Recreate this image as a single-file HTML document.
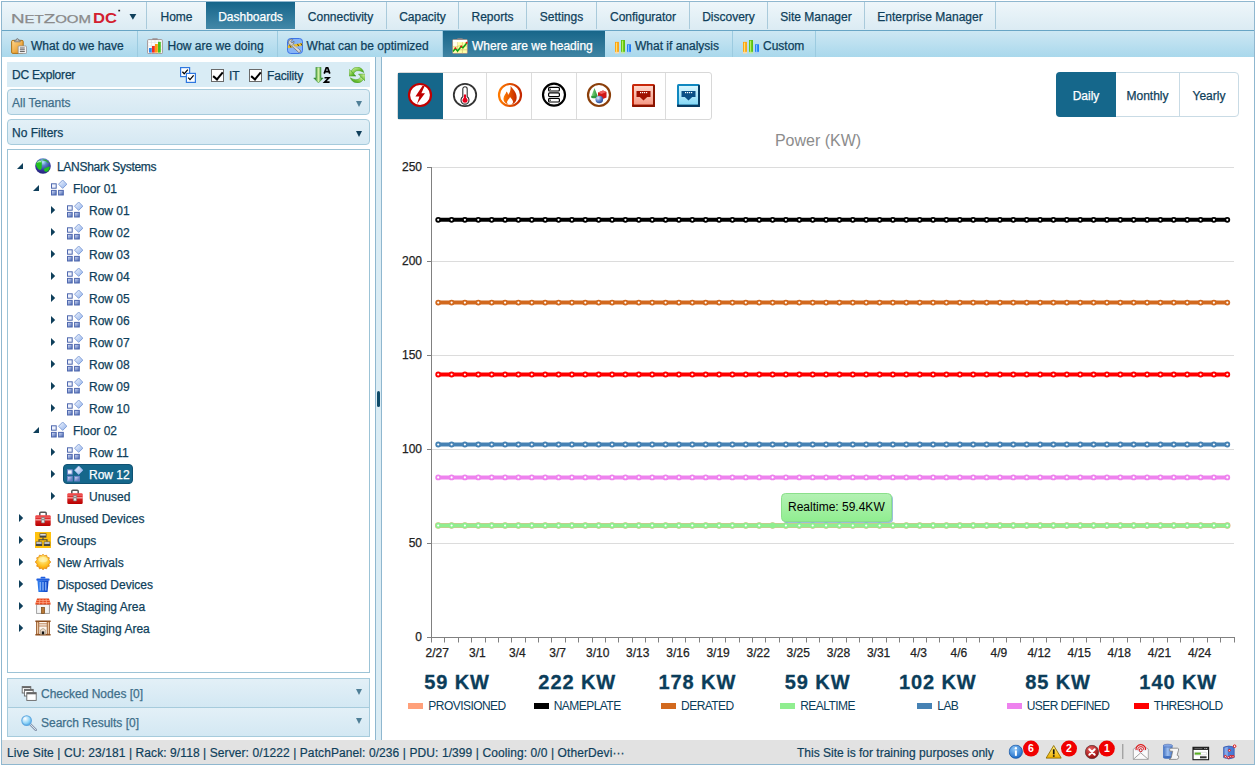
<!DOCTYPE html>
<html><head><meta charset="utf-8">
<style>
*{box-sizing:border-box;margin:0;padding:0}
html,body{width:1259px;height:767px;overflow:hidden;background:#fff;font-family:"Liberation Sans",sans-serif;font-size:12px;color:#0f3f5b}
.abs{position:absolute}
#frame{position:absolute;left:1px;top:1px;width:1254px;height:764px;border:1px solid #8fb7cf;background:#fff}
/* top menu */
#menu{position:absolute;left:2px;top:2px;width:1252px;height:29px;background:linear-gradient(#eef6fa,#dbebf3);border-bottom:1px solid #68a5c5}
#menu .mi{-webkit-text-stroke:0.25px currentColor;position:absolute;top:0;height:27px;line-height:30px;text-align:center;border-right:1px solid #a9cadb;font-size:12px;color:#0f3f5b;white-space:nowrap}
#menu .mi.act{background:linear-gradient(#16658a,#4388a8);color:#fff;border-right:none}
/* sub tabs */
#tabs{position:absolute;left:2px;top:31px;width:1252px;height:26px;background:linear-gradient(#cde7f3,#a9d8ec)}
#tabs .tb{-webkit-text-stroke:0.25px currentColor;position:absolute;top:0;height:26px;line-height:30px;border-right:1px solid #9ccbe0;font-size:12px;color:#0f3f5b;white-space:nowrap;}
#tabs .tb.act{background:linear-gradient(#17668a,#3f84a3);color:#fff;border-right:none}
#tabs .tb svg{position:absolute;top:7px}

/* left panel */
#lp{-webkit-text-stroke:0.25px currentColor;position:absolute;left:7px;top:62px;width:363px;height:675px}
#lph{position:absolute;left:0;top:0;width:363px;height:25px;background:#d9ecf5;line-height:26px;padding-left:5px;color:#0f3f5b}
.dd{position:absolute;left:0;width:363px;height:25px;border:1px solid #a6cbdc;border-radius:4px;background:linear-gradient(#e3f0f7,#d6e9f3);line-height:25px;padding-left:4px}
.dd:after,.acc:after{content:"";position:absolute;right:7.5px;top:11px;border:3.5px solid transparent;border-top:6px solid #4f7f97;border-bottom:none}
.dd.dark:after{border-top-color:#0f3f5b}
#tree{position:absolute;left:0;top:87px;width:363px;height:524px;border:1px solid #9cc3d6;background:#fff}
.tr{position:absolute;left:0;height:22px;line-height:24px;white-space:nowrap;color:#0f3f5b}
.tr .ar{position:absolute;top:0;width:10px;height:22px}
.tr .ic{position:absolute;top:3px;width:16px;height:16px}
.tr .lb{position:absolute;top:0}
.tr.sel .selbg{position:absolute;top:1px;height:20px;background:#15678b;border-radius:4px;border:1px solid #0f5273}
.tr.sel .lb{color:#fff}
.acc{position:absolute;left:0;width:363px;height:29px;border:1px solid #a6cbdc;background:linear-gradient(#e3f0f7,#d3e8f3);line-height:28px;padding-left:33px;color:#3f6f8a}
.acc:after{top:10px;right:7.5px}
#split{position:absolute;left:375px;top:57px;width:7px;height:683px;background:#dbecf4;border-left:1px solid #8fb7cf;border-right:1px solid #8fb7cf}
#split i{position:absolute;left:1px;top:334px;width:3px;height:16px;border-radius:2px;background:#0f4a68}
#lpborder{position:absolute;left:371px;top:58px;width:1px;height:682px;background:#9cc3d6}
#rp{position:absolute;left:382px;top:57px;width:872px;height:683px;background:#fff}
#status{-webkit-text-stroke:0.2px currentColor;position:absolute;left:2px;top:740px;width:1252px;height:24px;background:#e2e2e2;line-height:26px;color:#0f3f5b;white-space:nowrap}

.lg{position:absolute;top:669px;width:120px;text-align:center;color:#0b3d5a}
.lg .lv{font-size:20px;font-weight:bold;line-height:26px;letter-spacing:0.9px;-webkit-text-stroke:0.3px #0b3d5a}
.lg .ln{font-size:12px;line-height:16px;margin-top:3px;letter-spacing:-0.55px;white-space:nowrap}
.lg .ln i{display:inline-block;width:15px;height:6px;margin-right:5px;vertical-align:1px}
/* toolbar */
#tbar{position:absolute;left:397px;top:72px;width:315px;height:48px;border:1px solid #d8d8d8;border-radius:3px;background:#fff}
#tbar .b{position:absolute;top:0;width:45px;height:46px;border-right:1px solid #dcdcdc}
#tbar .b.act{background:#16678b;left:0 !important;top:0;height:46px;width:45px !important;border:none}
#per{-webkit-text-stroke:0.25px currentColor;position:absolute;left:1056px;top:72px;width:183px;height:45px;border:1px solid #c9dbe5;border-radius:4px;background:#fff}
#per .p{position:absolute;top:0;height:43px;line-height:46px;text-align:center;color:#0f3f5b;border-right:1px solid #c9dbe5}
#per .p.act{background:#15678b;color:#fff;top:-1px;left:-1px;height:45px;line-height:48px;border-radius:4px 0 0 4px;border:none}

.cb{position:absolute;top:7px;width:13px;height:13px;border:1px solid #6a6a6a;background:#fff}
.cb:after{content:"";position:absolute;left:3px;top:0px;width:4px;height:8px;border:solid #000;border-width:0 2px 2px 0;transform:rotate(40deg)}
.acc svg{position:absolute;left:12.6px;top:7px}
.sti{position:absolute;top:4px}
.bdg{position:absolute;top:2px;width:13px;height:13px;border-radius:7px;background:#e00000;color:#fff;font-size:9px;font-weight:bold;line-height:13px;text-align:center}
</style></head><body>
<svg width="0" height="0" style="position:absolute"><defs>
<radialGradient id="gGlobe" cx="0.4" cy="0.3" r="0.75"><stop offset="0" stop-color="#9fc4f0"/><stop offset="0.45" stop-color="#3a5fc0"/><stop offset="1" stop-color="#141a6a"/></radialGradient>
<linearGradient id="gSq" x1="0" y1="0" x2="1" y2="1"><stop offset="0" stop-color="#dfe6fb"/><stop offset="1" stop-color="#3f5fae"/></linearGradient>
<linearGradient id="gDi" x1="0" y1="0" x2="1" y2="1"><stop offset="0" stop-color="#f4f8ff"/><stop offset="1" stop-color="#8fb0ea"/></linearGradient>
<linearGradient id="gRed" x1="0" y1="0" x2="0" y2="1"><stop offset="0" stop-color="#f04040"/><stop offset="1" stop-color="#b80000"/></linearGradient>
<radialGradient id="gSun" cx="0.5" cy="0.35" r="0.7"><stop offset="0" stop-color="#fff3a0"/><stop offset="0.6" stop-color="#ffc020"/><stop offset="1" stop-color="#f08800"/></radialGradient>
<linearGradient id="gBlue" x1="0" y1="0" x2="1" y2="0"><stop offset="0" stop-color="#2f7ff0"/><stop offset="1" stop-color="#0b3fc0"/></linearGradient>
<linearGradient id="gClip" x1="0" y1="0" x2="1" y2="1"><stop offset="0" stop-color="#ffd890"/><stop offset="1" stop-color="#e08a10"/></linearGradient>
<linearGradient id="gGreen" x1="0" y1="0" x2="0" y2="1"><stop offset="0" stop-color="#c8f080"/><stop offset="1" stop-color="#3f9a1f"/></linearGradient>
<radialGradient id="gLens" cx="0.35" cy="0.3" r="0.8"><stop offset="0" stop-color="#ffffff"/><stop offset="0.6" stop-color="#8fd4f8"/><stop offset="1" stop-color="#3f9fe0"/></radialGradient>
<radialGradient id="gInfo" cx="0.4" cy="0.3" r="0.8"><stop offset="0" stop-color="#8fc8f8"/><stop offset="1" stop-color="#0f5fc0"/></radialGradient>
<radialGradient id="gErr" cx="0.4" cy="0.3" r="0.8"><stop offset="0" stop-color="#e86060"/><stop offset="1" stop-color="#8a0000"/></radialGradient>
<linearGradient id="gWarn" x1="0" y1="0" x2="0" y2="1"><stop offset="0" stop-color="#fff080"/><stop offset="1" stop-color="#f0b000"/></linearGradient>

<symbol id="ic-globe" viewBox="0 0 16 16">
<radialGradient id="gGl2" cx="0.5" cy="0.25" r="0.75"><stop offset="0" stop-color="#b8ecf8"/><stop offset="0.3" stop-color="#5a84c8"/><stop offset="0.7" stop-color="#34349a"/><stop offset="1" stop-color="#24247a"/></radialGradient>
<circle cx="8" cy="8" r="7.8" fill="url(#gGl2)"/>
<path d="M1 5.8 C1.8 4 3.4 2.6 5 2.6 C6.4 2.8 6.9 4 6.8 5.4 C6.7 7 7 8.4 6.6 10 C6.2 11.4 5.4 12.2 4.4 11.8 C3.2 11.2 2 9.6 1.4 8 C1 7 0.8 6.4 1 5.8Z" fill="#22c022"/>
<path d="M1.6 5 C2.4 3.6 3.6 2.8 5 2.6 C6 2.8 6.4 3.6 6.2 4.4 C4.6 4 3 4.4 1.6 5Z" fill="#a8e8a8"/>
<path d="M9 11.2 C9.6 10 11 9.4 12.4 9.2 C13.4 9 14 8.2 14.6 8.6 C15 9.6 14.6 11.2 13.6 12.4 C12.6 13.6 11 13.9 10 13.4 C9.2 12.9 8.8 12 9 11.2Z" fill="#1fc01f"/>
<path d="M7.6 1.6 C9 1.2 11 1.6 12.4 2.8 C13.4 3.6 14 4.6 13.6 5 C12.8 5 12 4 11 3.2 C10 2.6 8.6 2.6 7.6 2.4Z" fill="#30b030"/></symbol>

<symbol id="ic-grid" viewBox="0 0 16 16">
<rect x="0.5" y="3.8" width="4.7" height="4.4" fill="#eef2fd" stroke="#4f68ae" stroke-width="1"/>
<rect x="0.5" y="10.4" width="4.7" height="4.6" fill="url(#gSq)" stroke="#4f68ae" stroke-width="1"/>
<rect x="7.6" y="10.4" width="4.7" height="4.6" fill="url(#gSq)" stroke="#4f68ae" stroke-width="1"/>
<path d="M11.7 0 L15.9 4.2 L11.7 8.4 L7.5 4.2 Z" fill="url(#gDi)" stroke="#6f8fd0" stroke-width="0.8"/></symbol>

<symbol id="ic-gridsel" viewBox="0 0 16 16">
<rect x="0.5" y="3.8" width="4.7" height="4.4" fill="#eef2fd" stroke="#6a84c8" stroke-width="1"/>
<rect x="0.5" y="10.4" width="4.7" height="4.6" fill="url(#gSq)" stroke="#6a84c8" stroke-width="1"/>
<rect x="7.6" y="10.4" width="4.7" height="4.6" fill="url(#gSq)" stroke="#6a84c8" stroke-width="1"/>
<path d="M11.7 0 L15.9 4.2 L11.7 8.4 L7.5 4.2 Z" fill="url(#gDi)" stroke="#9fb8f0" stroke-width="0.8"/></symbol>

<symbol id="ic-toolbox" viewBox="0 -0.7 16 16">
<path d="M4.8 5 V2.6 Q4.8 1.6 5.8 1.6 H10.2 Q11.2 1.6 11.2 2.6 V5" fill="none" stroke="#555" stroke-width="1.5"/>
<rect x="0.3" y="4.6" width="15.4" height="10.6" rx="1.2" fill="url(#gRed)"/>
<rect x="0.3" y="8.6" width="15.4" height="1.1" fill="#ffd0d0" opacity="0.9"/>
<rect x="0.3" y="6" width="15.4" height="0.8" fill="#ff9a9a" opacity="0.7"/>
<rect x="6.4" y="6.8" width="3.2" height="5.4" rx="0.6" fill="#e8e8e8" stroke="#777" stroke-width="0.7"/>
<rect x="7.3" y="8" width="1.4" height="1.6" fill="#666"/></symbol>

<symbol id="ic-groups" viewBox="0 0 16 16"><rect x="0" y="0" width="16" height="16" fill="#ffc20e"/>
<rect x="4.6" y="1.4" width="6.8" height="4.2" fill="#444"/><rect x="5.2" y="2" width="5.6" height="1.6" fill="#ddd"/>
<rect x="0.8" y="9.6" width="6.4" height="4.4" fill="#444"/><rect x="1.4" y="10.2" width="5.2" height="1.6" fill="#ddd"/>
<rect x="8.8" y="9.6" width="6.4" height="4.4" fill="#444"/><rect x="9.4" y="10.2" width="5.2" height="1.6" fill="#ddd"/>
<path d="M8 5.6 V7.8 M4 9.6 V7.8 H12 V9.6" fill="none" stroke="#444" stroke-width="1.1"/></symbol>

<symbol id="ic-sun" viewBox="0 0 16 16">
<path d="M8 0.2 L9.5 1.7 L11.6 1.2 L12.2 3.2 L14.3 3.8 L13.8 5.9 L15.8 8 L13.8 10.1 L14.3 12.2 L12.2 12.8 L11.6 14.8 L9.5 14.3 L8 15.8 L6.5 14.3 L4.4 14.8 L3.8 12.8 L1.7 12.2 L2.2 10.1 L0.2 8 L2.2 5.9 L1.7 3.8 L3.8 3.2 L4.4 1.2 L6.5 1.7 Z" fill="url(#gSun)" stroke="#e08000" stroke-width="0.7"/>
<ellipse cx="8" cy="5.6" rx="4.6" ry="2.6" fill="#fff8c0" opacity="0.55"/></symbol>

<symbol id="ic-trash" viewBox="0 0 16 16">
<path d="M2.4 4.6 H13.6 L12.6 15.4 Q12.5 15.9 12 15.9 H4 Q3.5 15.9 3.4 15.4 Z" fill="url(#gBlue)"/>
<rect x="1.4" y="2.4" width="13.2" height="2.4" rx="0.8" fill="#1f5fe0"/><rect x="5.6" y="0.8" width="4.8" height="1.8" rx="0.6" fill="#1f5fe0"/>
<path d="M5.2 6 V14.4 M8 6 V14.4 M10.8 6 V14.4" stroke="#9fc4ff" stroke-width="1.1"/></symbol>

<symbol id="ic-stage1" viewBox="0 0 16 16">
<rect x="1.6" y="6.4" width="12.8" height="9" fill="#f4f4f4" stroke="#9a9a9a" stroke-width="0.9"/>
<path d="M2 0.6 H14 L15.8 6.6 H0.2 Z" fill="#e8481c"/>
<path d="M1.3 2.6 H14.7 M0.7 4.6 H15.3 M5 0.6 L4.2 6.6 M8 0.6 V6.6 M11 0.6 L11.8 6.6" stroke="#ffb090" stroke-width="0.7"/>
<rect x="6.4" y="9.4" width="3.2" height="6" fill="#b87838" stroke="#7a4a18" stroke-width="0.7"/></symbol>

<symbol id="ic-stage2" viewBox="0 0 16 16">
<rect x="3.4" y="2" width="9.2" height="12.4" fill="#fdf6ee"/>
<path d="M0.4 1.2 H15.6 M0.4 14.8 H15.6" stroke="#8a4a1a" stroke-width="1.4"/>
<rect x="1.6" y="1.8" width="2.2" height="12.4" fill="#f0c8a0" stroke="#8a4a1a" stroke-width="0.8"/>
<rect x="12.2" y="1.8" width="2.2" height="12.4" fill="#f0c8a0" stroke="#8a4a1a" stroke-width="0.8"/>
<path d="M3.8 3.8 H12.2 M3.8 6 H12.2" stroke="#b87848" stroke-width="0.9"/>
<path d="M5.4 14.4 V10 L8 8.4 L10.6 10 V14.4 Z" fill="#e8d8c8" stroke="#a08868" stroke-width="0.6"/>
<rect x="6.8" y="11.4" width="2.4" height="3" fill="#111"/></symbol>

<symbol id="ic-t1" viewBox="0 0 16 16">
<rect x="0.6" y="2.4" width="11.6" height="13" rx="1.2" fill="url(#gClip)" stroke="#a86808" stroke-width="0.9"/>
<path d="M3.6 3.8 V2.2 H5.2 Q5.4 0.5 6.4 0.5 Q7.4 0.5 7.6 2.2 H9.2 V3.8 Z" fill="#bfbfbf" stroke="#6a6a6a" stroke-width="0.7"/>
<rect x="7.2" y="8" width="8.2" height="7.6" rx="0.8" fill="#fff" stroke="#8a8a8a" stroke-width="0.8"/>
<path d="M8.8 10 H13.8 M8.8 11.8 H13.8 M8.8 13.6 H13.8" stroke="#444" stroke-width="0.9"/></symbol>

<symbol id="ic-t2" viewBox="0 0 16 16">
<rect x="0.6" y="1.6" width="14.8" height="14" rx="1" fill="#fff" stroke="#9a8a8a" stroke-width="0.9"/>
<rect x="5.4" y="0.3" width="5.2" height="1.6" fill="#9a8a8a"/>
<path d="M0.8 4.4 H15.2 M4.4 2 V15.4 M8 2 V15.4 M11.6 2 V15.4 M0.8 8 H15.2 M0.8 11.6 H15.2" stroke="#ddd" stroke-width="0.6"/>
<rect x="2" y="10" width="2.8" height="4.6" fill="#2f8af0"/><rect x="5" y="8" width="2.8" height="6.6" fill="#f03020"/>
<rect x="8" y="6" width="2.8" height="8.6" fill="#ff9a10"/><rect x="11" y="3.8" width="2.8" height="10.8" fill="#48c020"/></symbol>

<symbol id="ic-t3" viewBox="0 0 16 16">
<rect x="0.5" y="0.5" width="15" height="15" rx="3.2" fill="#86b4f6" stroke="#3c74e6" stroke-width="1"/>
<path d="M0.8 7.6 L15.2 5 V7.6 L0.8 10.2 Z" fill="#f4c020"/>
<path d="M2.6 7.3 L4 9.6 M6.4 6.6 L7.8 8.9 M10.4 5.9 L11.8 8.2 M13.8 5.3 L15 7.4" stroke="#5a4a10" stroke-width="1"/>
<path d="M1.6 3.2 A3 3 0 0 1 5.8 1.6 L3.9 3.5 L4.9 4.9 L7 3.2 A3 3 0 0 1 5.2 6.6 L13.4 12.4 A1.5 1.5 0 0 1 11.6 14.4 L3.8 7.2 A3 3 0 0 1 1.6 3.2Z" fill="#d0d0d0" stroke="#666" stroke-width="0.7"/>
<path d="M5.4 6.2 L12.4 12.6" stroke="#f4f4f4" stroke-width="0.8"/></symbol>

<symbol id="ic-t4" viewBox="0 0 16 16">
<rect x="0.6" y="1.6" width="14.8" height="14" rx="1" fill="#ffffa8" stroke="#9a8a8a" stroke-width="0.9"/>
<rect x="1" y="2" width="14" height="2.2" fill="#fff"/><rect x="5.4" y="0.3" width="5.2" height="1.6" fill="#9a8a8a"/>
<path d="M5.4 4.2 V15.2 M10.4 4.2 V15.2 M1 8 H15 M1 11.8 H15" stroke="#d8c870" stroke-width="0.8"/>
<rect x="1" y="4.2" width="4.4" height="3.8" fill="#fff" opacity="0.8"/>
<path d="M1 13.4 L3.4 10.6 L5.6 13 L9.2 8.6 L11 9.8 L14.8 5" fill="none" stroke="#10a010" stroke-width="1.5"/>
<circle cx="3.4" cy="10.2" r="1" fill="#f01010"/><circle cx="9.2" cy="8.4" r="1" fill="#f01010"/><circle cx="14.6" cy="4.8" r="1" fill="#f01010"/></symbol>

<symbol id="ic-t5" viewBox="0 0 16 16">
<rect x="0" y="3.9" width="3.9" height="10" fill="#ffa008"/><rect x="0.9" y="4.6" width="1.3" height="9.3" fill="#ffe070"/><rect x="0" y="13.9" width="3.9" height="1.6" fill="#ffd8a0"/>
<rect x="6" y="2" width="4" height="11.9" fill="#5cc010"/><rect x="6.9" y="2.7" width="1.3" height="11.2" fill="#b8f060"/><rect x="6" y="13.9" width="4" height="1.6" fill="#c0e8a0"/>
<rect x="12" y="6.3" width="4" height="7.6" fill="#1f7cf8"/><rect x="12.9" y="7" width="1.3" height="6.9" fill="#80c0ff"/><rect x="12" y="13.9" width="4" height="1.6" fill="#a8ccf8"/></symbol>

<symbol id="ic-dblchk" viewBox="0 0 16 16">
<rect x="0.6" y="0.6" width="9" height="9" fill="#fff" stroke="#2f78e0" stroke-width="1.2"/>
<path d="M2.4 4.8 L4.2 6.8 L7.8 2.6" fill="none" stroke="#000" stroke-width="1.3"/>
<rect x="6.4" y="6.4" width="9" height="9" fill="#fff" stroke="#2f78e0" stroke-width="1.2"/>
<path d="M8.2 10.6 L10 12.6 L13.6 8.4" fill="none" stroke="#000" stroke-width="1.3"/></symbol>

<symbol id="ic-sort" viewBox="0 0 18 16">
<linearGradient id="gSh" gradientUnits="userSpaceOnUse" x1="2.4" y1="0" x2="8.5" y2="0"><stop offset="0" stop-color="#2f8a2f"/><stop offset="0.5" stop-color="#d4f2a4"/><stop offset="1" stop-color="#2f8a2f"/></linearGradient>
<path d="M2.9 0.2 H8 V11 H10.2 L5.45 15.9 L0.7 11 H2.9 Z" fill="url(#gSh)" stroke="#2a8a2a" stroke-width="0.5"/>
<path d="M11.2 6.6 L13.4 0.5 H14.6 L16.8 6.6 M12 4.6 H16" fill="none" stroke="#000" stroke-width="1.7"/>
<path d="M11.5 10.7 H16.2 L11.6 15.1 H16.6" fill="none" stroke="#000" stroke-width="1.6"/></symbol>

<symbol id="ic-refresh" viewBox="0 0 16.4 16.2">
<linearGradient id="gRf" x1="0" y1="0" x2="1" y2="1"><stop offset="0" stop-color="#e4f8b8"/><stop offset="0.6" stop-color="#6cc030"/><stop offset="1" stop-color="#2f8a1f"/></linearGradient>
<linearGradient id="gRf2" x1="1" y1="0" x2="0" y2="1"><stop offset="0" stop-color="#e4f8b8"/><stop offset="0.6" stop-color="#6cc030"/><stop offset="1" stop-color="#2f8a1f"/></linearGradient>
<path d="M1.8 4.4 C3.5 1.5 6 0.1 8.2 0.1 C11.6 0.1 14.1 2.6 14.8 5.6 C12.6 3.9 10.1 3.5 8.1 3.7 C6.6 3.9 5.3 5 4.7 6.9 Z" fill="url(#gRf)" stroke="#3f9a22" stroke-width="0.5"/>
<path d="M0.2 2.4 V9.1 H6.9 Z" fill="url(#gRf)" stroke="#3f9a22" stroke-width="0.5"/>
<path d="M14.5 12.2 C12.9 14.8 10.6 16 8.5 16 C5.1 16 2.3 13.8 1.4 10.8 C3.6 12.4 6.1 12.8 8.1 12.6 C9.7 12.4 11.1 11.2 11.7 9.4 Z" fill="url(#gRf2)" stroke="#3f9a22" stroke-width="0.5"/>
<path d="M9.5 7.1 H16.2 V14.1 Z" fill="url(#gRf2)" stroke="#3f9a22" stroke-width="0.5"/></symbol>

<symbol id="ic-cascade" viewBox="0 0 16 16">
<rect x="1.2" y="0.6" width="8.6" height="6.4" fill="#fff" stroke="#666" stroke-width="0.9"/><rect x="1.2" y="0.6" width="8.6" height="1.5" fill="#666"/>
<rect x="3.4" y="3.4" width="8.8" height="6.6" fill="#fff" stroke="#666" stroke-width="0.9"/><rect x="3.4" y="3.4" width="8.8" height="1.5" fill="#666"/>
<rect x="5.8" y="6.6" width="9.4" height="7.8" fill="#fff" stroke="#666" stroke-width="0.9"/><rect x="5.8" y="6.6" width="9.4" height="1.7" fill="#666"/></symbol>

<symbol id="ic-search" viewBox="0 0 16 16">
<path d="M8.8 8.8 L14.8 14.8" stroke="#8a9ab0" stroke-width="2.6" stroke-linecap="round"/>
<path d="M9.2 9.2 L14.6 14.6" stroke="#d8e4f0" stroke-width="1" stroke-linecap="round"/>
<circle cx="5.6" cy="5.6" r="4.8" fill="url(#gLens)" stroke="#5fa8e0" stroke-width="1.1"/></symbol>

<symbol id="ic-info" viewBox="0 0 16 16"><circle cx="8" cy="8" r="7.4" fill="url(#gInfo)" stroke="#0f4fa0" stroke-width="0.8"/>
<rect x="7" y="6.6" width="2.2" height="6" fill="#fff"/><circle cx="8.1" cy="4.2" r="1.3" fill="#fff"/></symbol>
<symbol id="ic-warn" viewBox="0 0 16 16"><path d="M8 0.8 L15.6 14.8 H0.4 Z" fill="url(#gWarn)" stroke="#8a6a00" stroke-width="0.9" stroke-linejoin="round"/>
<rect x="7.2" y="5" width="1.7" height="5.6" fill="#111"/><rect x="7.2" y="11.6" width="1.7" height="1.7" fill="#111"/></symbol>
<symbol id="ic-err" viewBox="0 0 16 16"><circle cx="8" cy="8" r="7.4" fill="url(#gErr)" stroke="#6a3a3a" stroke-width="0.9"/>
<path d="M5 5 L11 11 M11 5 L5 11" stroke="#fff" stroke-width="2.2" stroke-linecap="round"/></symbol>
</defs></svg>

<div id="frame"></div>
<div id="menu"><div class="mi" style="left:0;width:145px"></div><svg class="abs" style="left:-2px;top:-2px" width="146" height="30" viewBox="0 0 146 30" font-family="Liberation Sans, sans-serif">
<text x="11" y="23" fill="#8a8a8a" stroke="#8a8a8a" stroke-width="0.25" font-size="13.3" textLength="80" lengthAdjust="spacingAndGlyphs">N<tspan font-size="10.6">ET</tspan>Z<tspan font-size="10.6">OOM</tspan></text>
<text x="93" y="23.2" fill="#d2202f" font-weight="bold" font-size="15.4" textLength="24" lengthAdjust="spacingAndGlyphs">DC</text>
<rect x="118.3" y="9.8" width="1.8" height="1.6" fill="#222"/>
<path d="M129.5 14 H136.3 L132.9 19.8 Z" fill="#0f3f5b"/></svg><div class="mi" style="left:145px;width:59px;border-right:none">Home</div><div class="mi act" style="left:204px;width:89px">Dashboards</div><div class="mi" style="left:293px;width:92px">Connectivity</div><div class="mi" style="left:385px;width:72px">Capacity</div><div class="mi" style="left:457px;width:68px">Reports</div><div class="mi" style="left:525px;width:70px">Settings</div><div class="mi" style="left:595px;width:93px">Configurator</div><div class="mi" style="left:688px;width:78px">Discovery</div><div class="mi" style="left:766px;width:97px">Site Manager</div><div class="mi" style="left:863px;width:131px">Enterprise Manager</div></div>
<div id="tabs"><div class="tb" style="left:0px;width:136px;padding-left:29px"><svg width="16" height="16" viewBox="0 0 16 16" style="left:9px"><use href="#ic-t1"/></svg>What do we have</div><div class="tb" style="left:136px;width:140px;padding-left:29.5px"><svg width="16" height="16" viewBox="0 0 16 16" style="left:9px"><use href="#ic-t2"/></svg>How are we doing</div><div class="tb" style="left:276px;width:165px;padding-left:28.6px"><svg width="16" height="16" viewBox="0 0 16 16" style="left:9px"><use href="#ic-t3"/></svg>What can be optimized</div><div class="tb act" style="left:441px;width:162px;padding-left:29px"><svg width="16" height="16" viewBox="0 0 16 16" style="left:9.4px"><use href="#ic-t4"/></svg>Where are we heading</div><div class="tb" style="left:603px;width:128px;padding-left:30px"><svg width="16" height="16" viewBox="0 0 16 16" style="left:10px"><use href="#ic-t5"/></svg>What if analysis</div><div class="tb" style="left:731px;width:83px;padding-left:30px"><svg width="16" height="16" viewBox="0 0 16 16" style="left:10px"><use href="#ic-t5"/></svg>Custom</div></div>
<div id="lp"><div id="lph"><span style="letter-spacing:-0.2px">DC Explorer</span>
<svg class="abs" style="left:173px;top:5px" width="16" height="16"><use href="#ic-dblchk"/></svg>
<span class="cb" style="left:204px"></span><span class="abs" style="left:222px;top:1px">IT</span>
<span class="cb" style="left:242px"></span><span class="abs" style="left:260px;top:1px;letter-spacing:-0.15px">Facility</span>
<svg class="abs" style="left:306px;top:5px" width="18" height="16"><use href="#ic-sort"/></svg>
<svg class="abs" style="left:342px;top:4.8px" width="16.4" height="16.2"><use href="#ic-refresh"/></svg>
</div>
<div class="dd" style="top:27px;height:26px;line-height:26px;color:#3f6f8a">All Tenants</div>
<div class="dd dark" style="top:57px;height:26px;line-height:26px">No Filters</div>
<div id="tree"><div class="tr" style="top:5px"><svg class="ar" style="left:7px" viewBox="0 0 10 22"><path d="M2 14 L8 14 L8 8 Z" fill="#0f3f5b"/></svg><svg class="ic globe" style="left:27px" viewBox="0 0 16 16"><use href="#ic-globe"/></svg><span class="lb" style="left:49px;letter-spacing:-0.3px">LANShark Systems</span></div><div class="tr" style="top:27px"><svg class="ar" style="left:23px" viewBox="0 0 10 22"><path d="M2 14 L8 14 L8 8 Z" fill="#0f3f5b"/></svg><svg class="ic grid" style="left:43px" viewBox="0 0 16 16"><use href="#ic-grid"/></svg><span class="lb" style="left:65px">Floor 01</span></div><div class="tr" style="top:49px"><svg class="ar" style="left:41px" viewBox="0 0 10 22"><path d="M2 7 L6.2 11 L2 15 Z" fill="#0f3f5b"/></svg><svg class="ic grid" style="left:59px" viewBox="0 0 16 16"><use href="#ic-grid"/></svg><span class="lb" style="left:81px">Row 01</span></div><div class="tr" style="top:71px"><svg class="ar" style="left:41px" viewBox="0 0 10 22"><path d="M2 7 L6.2 11 L2 15 Z" fill="#0f3f5b"/></svg><svg class="ic grid" style="left:59px" viewBox="0 0 16 16"><use href="#ic-grid"/></svg><span class="lb" style="left:81px">Row 02</span></div><div class="tr" style="top:93px"><svg class="ar" style="left:41px" viewBox="0 0 10 22"><path d="M2 7 L6.2 11 L2 15 Z" fill="#0f3f5b"/></svg><svg class="ic grid" style="left:59px" viewBox="0 0 16 16"><use href="#ic-grid"/></svg><span class="lb" style="left:81px">Row 03</span></div><div class="tr" style="top:115px"><svg class="ar" style="left:41px" viewBox="0 0 10 22"><path d="M2 7 L6.2 11 L2 15 Z" fill="#0f3f5b"/></svg><svg class="ic grid" style="left:59px" viewBox="0 0 16 16"><use href="#ic-grid"/></svg><span class="lb" style="left:81px">Row 04</span></div><div class="tr" style="top:137px"><svg class="ar" style="left:41px" viewBox="0 0 10 22"><path d="M2 7 L6.2 11 L2 15 Z" fill="#0f3f5b"/></svg><svg class="ic grid" style="left:59px" viewBox="0 0 16 16"><use href="#ic-grid"/></svg><span class="lb" style="left:81px">Row 05</span></div><div class="tr" style="top:159px"><svg class="ar" style="left:41px" viewBox="0 0 10 22"><path d="M2 7 L6.2 11 L2 15 Z" fill="#0f3f5b"/></svg><svg class="ic grid" style="left:59px" viewBox="0 0 16 16"><use href="#ic-grid"/></svg><span class="lb" style="left:81px">Row 06</span></div><div class="tr" style="top:181px"><svg class="ar" style="left:41px" viewBox="0 0 10 22"><path d="M2 7 L6.2 11 L2 15 Z" fill="#0f3f5b"/></svg><svg class="ic grid" style="left:59px" viewBox="0 0 16 16"><use href="#ic-grid"/></svg><span class="lb" style="left:81px">Row 07</span></div><div class="tr" style="top:203px"><svg class="ar" style="left:41px" viewBox="0 0 10 22"><path d="M2 7 L6.2 11 L2 15 Z" fill="#0f3f5b"/></svg><svg class="ic grid" style="left:59px" viewBox="0 0 16 16"><use href="#ic-grid"/></svg><span class="lb" style="left:81px">Row 08</span></div><div class="tr" style="top:225px"><svg class="ar" style="left:41px" viewBox="0 0 10 22"><path d="M2 7 L6.2 11 L2 15 Z" fill="#0f3f5b"/></svg><svg class="ic grid" style="left:59px" viewBox="0 0 16 16"><use href="#ic-grid"/></svg><span class="lb" style="left:81px">Row 09</span></div><div class="tr" style="top:247px"><svg class="ar" style="left:41px" viewBox="0 0 10 22"><path d="M2 7 L6.2 11 L2 15 Z" fill="#0f3f5b"/></svg><svg class="ic grid" style="left:59px" viewBox="0 0 16 16"><use href="#ic-grid"/></svg><span class="lb" style="left:81px">Row 10</span></div><div class="tr" style="top:269px"><svg class="ar" style="left:23px" viewBox="0 0 10 22"><path d="M2 14 L8 14 L8 8 Z" fill="#0f3f5b"/></svg><svg class="ic grid" style="left:43px" viewBox="0 0 16 16"><use href="#ic-grid"/></svg><span class="lb" style="left:65px">Floor 02</span></div><div class="tr" style="top:291px"><svg class="ar" style="left:41px" viewBox="0 0 10 22"><path d="M2 7 L6.2 11 L2 15 Z" fill="#0f3f5b"/></svg><svg class="ic grid" style="left:59px" viewBox="0 0 16 16"><use href="#ic-grid"/></svg><span class="lb" style="left:81px">Row 11</span></div><div class="tr sel" style="top:313px"><svg class="ar" style="left:41px" viewBox="0 0 10 22"><path d="M2 7 L6.2 11 L2 15 Z" fill="#0f3f5b"/></svg><div class="selbg" style="left:55px;width:70px"></div><svg class="ic gridsel" style="left:59px" viewBox="0 0 16 16"><use href="#ic-gridsel"/></svg><span class="lb" style="left:81px">Row 12</span></div><div class="tr" style="top:335px"><svg class="ar" style="left:41px" viewBox="0 0 10 22"><path d="M2 7 L6.2 11 L2 15 Z" fill="#0f3f5b"/></svg><svg class="ic toolbox" style="left:59px" viewBox="0 0 16 16"><use href="#ic-toolbox"/></svg><span class="lb" style="left:81px">Unused</span></div><div class="tr" style="top:357px"><svg class="ar" style="left:9px" viewBox="0 0 10 22"><path d="M2 7 L6.2 11 L2 15 Z" fill="#0f3f5b"/></svg><svg class="ic toolbox" style="left:27px" viewBox="0 0 16 16"><use href="#ic-toolbox"/></svg><span class="lb" style="left:49px">Unused Devices</span></div><div class="tr" style="top:379px"><svg class="ar" style="left:9px" viewBox="0 0 10 22"><path d="M2 7 L6.2 11 L2 15 Z" fill="#0f3f5b"/></svg><svg class="ic groups" style="left:27px" viewBox="0 0 16 16"><use href="#ic-groups"/></svg><span class="lb" style="left:49px">Groups</span></div><div class="tr" style="top:401px"><svg class="ar" style="left:9px" viewBox="0 0 10 22"><path d="M2 7 L6.2 11 L2 15 Z" fill="#0f3f5b"/></svg><svg class="ic sun" style="left:27px" viewBox="0 0 16 16"><use href="#ic-sun"/></svg><span class="lb" style="left:49px">New Arrivals</span></div><div class="tr" style="top:423px"><svg class="ar" style="left:9px" viewBox="0 0 10 22"><path d="M2 7 L6.2 11 L2 15 Z" fill="#0f3f5b"/></svg><svg class="ic trash" style="left:27px" viewBox="0 0 16 16"><use href="#ic-trash"/></svg><span class="lb" style="left:49px">Disposed Devices</span></div><div class="tr" style="top:445px"><svg class="ar" style="left:9px" viewBox="0 0 10 22"><path d="M2 7 L6.2 11 L2 15 Z" fill="#0f3f5b"/></svg><svg class="ic stage1" style="left:27px" viewBox="0 0 16 16"><use href="#ic-stage1"/></svg><span class="lb" style="left:49px">My Staging Area</span></div><div class="tr" style="top:467px"><svg class="ar" style="left:9px" viewBox="0 0 10 22"><path d="M2 7 L6.2 11 L2 15 Z" fill="#0f3f5b"/></svg><svg class="ic stage2" style="left:27px" viewBox="0 0 16 16"><use href="#ic-stage2"/></svg><span class="lb" style="left:49px">Site Staging Area</span></div></div>
<div class="acc" style="top:616px;height:30px;line-height:30px"><svg width="16" height="16"><use href="#ic-cascade"/></svg>Checked Nodes [0]</div>
<div class="acc" style="top:645px;height:30px;line-height:30px"><svg width="16" height="16"><use href="#ic-search"/></svg>Search Results [0]</div>
</div>
<div id="split"><i></i></div>
<div id="rp"></div>
<div id="status"><span style="position:absolute;left:5px;letter-spacing:0.09px">Live Site | CU: 23/181 | Rack: 9/118 | Server: 0/1222 | PatchPanel: 0/236 | PDU: 1/399 | Cooling: 0/0 | OtherDevi···</span><span style="position:absolute;left:795px">This Site is for training purposes only</span></div>
<svg id="chart" class="abs" style="left:0;top:0" width="1259" height="767" viewBox="0 0 1259 767" font-family="Liberation Sans, sans-serif"><line x1="431" x2="1234" y1="543.5" y2="543.5" stroke="#dcdcdc" stroke-width="1"/><line x1="431" x2="1234" y1="449.5" y2="449.5" stroke="#dcdcdc" stroke-width="1"/><line x1="431" x2="1234" y1="355.5" y2="355.5" stroke="#dcdcdc" stroke-width="1"/><line x1="431" x2="1234" y1="261.5" y2="261.5" stroke="#dcdcdc" stroke-width="1"/><line x1="431" x2="1234" y1="167.5" y2="167.5" stroke="#dcdcdc" stroke-width="1"/><line x1="427" x2="431" y1="637.5" y2="637.5" stroke="#808080" stroke-width="1"/><text x="422" y="640.5" font-size="12" text-anchor="end" fill="#222" stroke="#222" stroke-width="0.25">0</text><line x1="427" x2="431" y1="543.5" y2="543.5" stroke="#808080" stroke-width="1"/><text x="422" y="546.5" font-size="12" text-anchor="end" fill="#222" stroke="#222" stroke-width="0.25">50</text><line x1="427" x2="431" y1="449.5" y2="449.5" stroke="#808080" stroke-width="1"/><text x="422" y="452.5" font-size="12" text-anchor="end" fill="#222" stroke="#222" stroke-width="0.25">100</text><line x1="427" x2="431" y1="355.5" y2="355.5" stroke="#808080" stroke-width="1"/><text x="422" y="358.5" font-size="12" text-anchor="end" fill="#222" stroke="#222" stroke-width="0.25">150</text><line x1="427" x2="431" y1="261.5" y2="261.5" stroke="#808080" stroke-width="1"/><text x="422" y="264.5" font-size="12" text-anchor="end" fill="#222" stroke="#222" stroke-width="0.25">200</text><line x1="427" x2="431" y1="167.5" y2="167.5" stroke="#808080" stroke-width="1"/><text x="422" y="170.5" font-size="12" text-anchor="end" fill="#222" stroke="#222" stroke-width="0.25">250</text><line x1="431.5" x2="431.5" y1="167" y2="638" stroke="#808080"/><line x1="431" x2="1234" y1="637.5" y2="637.5" stroke="#808080"/><line x1="431.5" x2="431.5" y1="637" y2="642.5" stroke="#808080"/><line x1="444.5" x2="444.5" y1="637" y2="642.5" stroke="#808080"/><line x1="458.5" x2="458.5" y1="637" y2="642.5" stroke="#808080"/><line x1="471.5" x2="471.5" y1="637" y2="642.5" stroke="#808080"/><line x1="485.5" x2="485.5" y1="637" y2="642.5" stroke="#808080"/><line x1="498.5" x2="498.5" y1="637" y2="642.5" stroke="#808080"/><line x1="511.5" x2="511.5" y1="637" y2="642.5" stroke="#808080"/><line x1="525.5" x2="525.5" y1="637" y2="642.5" stroke="#808080"/><line x1="538.5" x2="538.5" y1="637" y2="642.5" stroke="#808080"/><line x1="551.5" x2="551.5" y1="637" y2="642.5" stroke="#808080"/><line x1="565.5" x2="565.5" y1="637" y2="642.5" stroke="#808080"/><line x1="578.5" x2="578.5" y1="637" y2="642.5" stroke="#808080"/><line x1="592.5" x2="592.5" y1="637" y2="642.5" stroke="#808080"/><line x1="605.5" x2="605.5" y1="637" y2="642.5" stroke="#808080"/><line x1="618.5" x2="618.5" y1="637" y2="642.5" stroke="#808080"/><line x1="632.5" x2="632.5" y1="637" y2="642.5" stroke="#808080"/><line x1="645.5" x2="645.5" y1="637" y2="642.5" stroke="#808080"/><line x1="658.5" x2="658.5" y1="637" y2="642.5" stroke="#808080"/><line x1="672.5" x2="672.5" y1="637" y2="642.5" stroke="#808080"/><line x1="685.5" x2="685.5" y1="637" y2="642.5" stroke="#808080"/><line x1="699.5" x2="699.5" y1="637" y2="642.5" stroke="#808080"/><line x1="712.5" x2="712.5" y1="637" y2="642.5" stroke="#808080"/><line x1="725.5" x2="725.5" y1="637" y2="642.5" stroke="#808080"/><line x1="739.5" x2="739.5" y1="637" y2="642.5" stroke="#808080"/><line x1="752.5" x2="752.5" y1="637" y2="642.5" stroke="#808080"/><line x1="765.5" x2="765.5" y1="637" y2="642.5" stroke="#808080"/><line x1="779.5" x2="779.5" y1="637" y2="642.5" stroke="#808080"/><line x1="792.5" x2="792.5" y1="637" y2="642.5" stroke="#808080"/><line x1="806.5" x2="806.5" y1="637" y2="642.5" stroke="#808080"/><line x1="819.5" x2="819.5" y1="637" y2="642.5" stroke="#808080"/><line x1="832.5" x2="832.5" y1="637" y2="642.5" stroke="#808080"/><line x1="846.5" x2="846.5" y1="637" y2="642.5" stroke="#808080"/><line x1="859.5" x2="859.5" y1="637" y2="642.5" stroke="#808080"/><line x1="872.5" x2="872.5" y1="637" y2="642.5" stroke="#808080"/><line x1="886.5" x2="886.5" y1="637" y2="642.5" stroke="#808080"/><line x1="899.5" x2="899.5" y1="637" y2="642.5" stroke="#808080"/><line x1="913.5" x2="913.5" y1="637" y2="642.5" stroke="#808080"/><line x1="926.5" x2="926.5" y1="637" y2="642.5" stroke="#808080"/><line x1="939.5" x2="939.5" y1="637" y2="642.5" stroke="#808080"/><line x1="953.5" x2="953.5" y1="637" y2="642.5" stroke="#808080"/><line x1="966.5" x2="966.5" y1="637" y2="642.5" stroke="#808080"/><line x1="979.5" x2="979.5" y1="637" y2="642.5" stroke="#808080"/><line x1="993.5" x2="993.5" y1="637" y2="642.5" stroke="#808080"/><line x1="1006.5" x2="1006.5" y1="637" y2="642.5" stroke="#808080"/><line x1="1020.5" x2="1020.5" y1="637" y2="642.5" stroke="#808080"/><line x1="1033.5" x2="1033.5" y1="637" y2="642.5" stroke="#808080"/><line x1="1046.5" x2="1046.5" y1="637" y2="642.5" stroke="#808080"/><line x1="1060.5" x2="1060.5" y1="637" y2="642.5" stroke="#808080"/><line x1="1073.5" x2="1073.5" y1="637" y2="642.5" stroke="#808080"/><line x1="1086.5" x2="1086.5" y1="637" y2="642.5" stroke="#808080"/><line x1="1100.5" x2="1100.5" y1="637" y2="642.5" stroke="#808080"/><line x1="1113.5" x2="1113.5" y1="637" y2="642.5" stroke="#808080"/><line x1="1127.5" x2="1127.5" y1="637" y2="642.5" stroke="#808080"/><line x1="1140.5" x2="1140.5" y1="637" y2="642.5" stroke="#808080"/><line x1="1153.5" x2="1153.5" y1="637" y2="642.5" stroke="#808080"/><line x1="1167.5" x2="1167.5" y1="637" y2="642.5" stroke="#808080"/><line x1="1180.5" x2="1180.5" y1="637" y2="642.5" stroke="#808080"/><line x1="1193.5" x2="1193.5" y1="637" y2="642.5" stroke="#808080"/><line x1="1207.5" x2="1207.5" y1="637" y2="642.5" stroke="#808080"/><line x1="1220.5" x2="1220.5" y1="637" y2="642.5" stroke="#808080"/><line x1="1234.5" x2="1234.5" y1="637" y2="642.5" stroke="#808080"/><text x="437.2" y="657" font-size="12" text-anchor="middle" fill="#222" stroke="#222" stroke-width="0.25">2/27</text><text x="477.3" y="657" font-size="12" text-anchor="middle" fill="#222" stroke="#222" stroke-width="0.25">3/1</text><text x="517.4" y="657" font-size="12" text-anchor="middle" fill="#222" stroke="#222" stroke-width="0.25">3/4</text><text x="557.6" y="657" font-size="12" text-anchor="middle" fill="#222" stroke="#222" stroke-width="0.25">3/7</text><text x="597.7" y="657" font-size="12" text-anchor="middle" fill="#222" stroke="#222" stroke-width="0.25">3/10</text><text x="637.8" y="657" font-size="12" text-anchor="middle" fill="#222" stroke="#222" stroke-width="0.25">3/13</text><text x="677.9" y="657" font-size="12" text-anchor="middle" fill="#222" stroke="#222" stroke-width="0.25">3/16</text><text x="718.1" y="657" font-size="12" text-anchor="middle" fill="#222" stroke="#222" stroke-width="0.25">3/19</text><text x="758.2" y="657" font-size="12" text-anchor="middle" fill="#222" stroke="#222" stroke-width="0.25">3/22</text><text x="798.3" y="657" font-size="12" text-anchor="middle" fill="#222" stroke="#222" stroke-width="0.25">3/25</text><text x="838.4" y="657" font-size="12" text-anchor="middle" fill="#222" stroke="#222" stroke-width="0.25">3/28</text><text x="878.6" y="657" font-size="12" text-anchor="middle" fill="#222" stroke="#222" stroke-width="0.25">3/31</text><text x="918.7" y="657" font-size="12" text-anchor="middle" fill="#222" stroke="#222" stroke-width="0.25">4/3</text><text x="958.8" y="657" font-size="12" text-anchor="middle" fill="#222" stroke="#222" stroke-width="0.25">4/6</text><text x="998.9" y="657" font-size="12" text-anchor="middle" fill="#222" stroke="#222" stroke-width="0.25">4/9</text><text x="1039.1" y="657" font-size="12" text-anchor="middle" fill="#222" stroke="#222" stroke-width="0.25">4/12</text><text x="1079.2" y="657" font-size="12" text-anchor="middle" fill="#222" stroke="#222" stroke-width="0.25">4/15</text><text x="1119.3" y="657" font-size="12" text-anchor="middle" fill="#222" stroke="#222" stroke-width="0.25">4/18</text><text x="1159.4" y="657" font-size="12" text-anchor="middle" fill="#222" stroke="#222" stroke-width="0.25">4/21</text><text x="1199.6" y="657" font-size="12" text-anchor="middle" fill="#222" stroke="#222" stroke-width="0.25">4/24</text><g><line x1="438.2" x2="1227.3" y1="525.5" y2="525.5" stroke="#f5b08a" stroke-width="4.8"/><circle cx="438.2" cy="525.5" r="2.3" fill="#fff" stroke="#f5b08a" stroke-width="1.8"/><circle cx="451.6" cy="525.5" r="2.3" fill="#fff" stroke="#f5b08a" stroke-width="1.8"/><circle cx="464.9" cy="525.5" r="2.3" fill="#fff" stroke="#f5b08a" stroke-width="1.8"/><circle cx="478.3" cy="525.5" r="2.3" fill="#fff" stroke="#f5b08a" stroke-width="1.8"/><circle cx="491.7" cy="525.5" r="2.3" fill="#fff" stroke="#f5b08a" stroke-width="1.8"/><circle cx="505.1" cy="525.5" r="2.3" fill="#fff" stroke="#f5b08a" stroke-width="1.8"/><circle cx="518.4" cy="525.5" r="2.3" fill="#fff" stroke="#f5b08a" stroke-width="1.8"/><circle cx="531.8" cy="525.5" r="2.3" fill="#fff" stroke="#f5b08a" stroke-width="1.8"/><circle cx="545.2" cy="525.5" r="2.3" fill="#fff" stroke="#f5b08a" stroke-width="1.8"/><circle cx="558.6" cy="525.5" r="2.3" fill="#fff" stroke="#f5b08a" stroke-width="1.8"/><circle cx="571.9" cy="525.5" r="2.3" fill="#fff" stroke="#f5b08a" stroke-width="1.8"/><circle cx="585.3" cy="525.5" r="2.3" fill="#fff" stroke="#f5b08a" stroke-width="1.8"/><circle cx="598.7" cy="525.5" r="2.3" fill="#fff" stroke="#f5b08a" stroke-width="1.8"/><circle cx="612.1" cy="525.5" r="2.3" fill="#fff" stroke="#f5b08a" stroke-width="1.8"/><circle cx="625.4" cy="525.5" r="2.3" fill="#fff" stroke="#f5b08a" stroke-width="1.8"/><circle cx="638.8" cy="525.5" r="2.3" fill="#fff" stroke="#f5b08a" stroke-width="1.8"/><circle cx="652.2" cy="525.5" r="2.3" fill="#fff" stroke="#f5b08a" stroke-width="1.8"/><circle cx="665.6" cy="525.5" r="2.3" fill="#fff" stroke="#f5b08a" stroke-width="1.8"/><circle cx="678.9" cy="525.5" r="2.3" fill="#fff" stroke="#f5b08a" stroke-width="1.8"/><circle cx="692.3" cy="525.5" r="2.3" fill="#fff" stroke="#f5b08a" stroke-width="1.8"/><circle cx="705.7" cy="525.5" r="2.3" fill="#fff" stroke="#f5b08a" stroke-width="1.8"/><circle cx="719.1" cy="525.5" r="2.3" fill="#fff" stroke="#f5b08a" stroke-width="1.8"/><circle cx="732.4" cy="525.5" r="2.3" fill="#fff" stroke="#f5b08a" stroke-width="1.8"/><circle cx="745.8" cy="525.5" r="2.3" fill="#fff" stroke="#f5b08a" stroke-width="1.8"/><circle cx="759.2" cy="525.5" r="2.3" fill="#fff" stroke="#f5b08a" stroke-width="1.8"/><circle cx="772.6" cy="525.5" r="2.3" fill="#fff" stroke="#f5b08a" stroke-width="1.8"/><circle cx="785.9" cy="525.5" r="2.3" fill="#fff" stroke="#f5b08a" stroke-width="1.8"/><circle cx="799.3" cy="525.5" r="2.3" fill="#fff" stroke="#f5b08a" stroke-width="1.8"/><circle cx="812.7" cy="525.5" r="2.3" fill="#fff" stroke="#f5b08a" stroke-width="1.8"/><circle cx="826.1" cy="525.5" r="2.3" fill="#fff" stroke="#f5b08a" stroke-width="1.8"/><circle cx="839.4" cy="525.5" r="2.3" fill="#fff" stroke="#f5b08a" stroke-width="1.8"/><circle cx="852.8" cy="525.5" r="2.3" fill="#fff" stroke="#f5b08a" stroke-width="1.8"/><circle cx="866.2" cy="525.5" r="2.3" fill="#fff" stroke="#f5b08a" stroke-width="1.8"/><circle cx="879.6" cy="525.5" r="2.3" fill="#fff" stroke="#f5b08a" stroke-width="1.8"/><circle cx="892.9" cy="525.5" r="2.3" fill="#fff" stroke="#f5b08a" stroke-width="1.8"/><circle cx="906.3" cy="525.5" r="2.3" fill="#fff" stroke="#f5b08a" stroke-width="1.8"/><circle cx="919.7" cy="525.5" r="2.3" fill="#fff" stroke="#f5b08a" stroke-width="1.8"/><circle cx="933.1" cy="525.5" r="2.3" fill="#fff" stroke="#f5b08a" stroke-width="1.8"/><circle cx="946.4" cy="525.5" r="2.3" fill="#fff" stroke="#f5b08a" stroke-width="1.8"/><circle cx="959.8" cy="525.5" r="2.3" fill="#fff" stroke="#f5b08a" stroke-width="1.8"/><circle cx="973.2" cy="525.5" r="2.3" fill="#fff" stroke="#f5b08a" stroke-width="1.8"/><circle cx="986.6" cy="525.5" r="2.3" fill="#fff" stroke="#f5b08a" stroke-width="1.8"/><circle cx="999.9" cy="525.5" r="2.3" fill="#fff" stroke="#f5b08a" stroke-width="1.8"/><circle cx="1013.3" cy="525.5" r="2.3" fill="#fff" stroke="#f5b08a" stroke-width="1.8"/><circle cx="1026.7" cy="525.5" r="2.3" fill="#fff" stroke="#f5b08a" stroke-width="1.8"/><circle cx="1040.1" cy="525.5" r="2.3" fill="#fff" stroke="#f5b08a" stroke-width="1.8"/><circle cx="1053.4" cy="525.5" r="2.3" fill="#fff" stroke="#f5b08a" stroke-width="1.8"/><circle cx="1066.8" cy="525.5" r="2.3" fill="#fff" stroke="#f5b08a" stroke-width="1.8"/><circle cx="1080.2" cy="525.5" r="2.3" fill="#fff" stroke="#f5b08a" stroke-width="1.8"/><circle cx="1093.6" cy="525.5" r="2.3" fill="#fff" stroke="#f5b08a" stroke-width="1.8"/><circle cx="1106.9" cy="525.5" r="2.3" fill="#fff" stroke="#f5b08a" stroke-width="1.8"/><circle cx="1120.3" cy="525.5" r="2.3" fill="#fff" stroke="#f5b08a" stroke-width="1.8"/><circle cx="1133.7" cy="525.5" r="2.3" fill="#fff" stroke="#f5b08a" stroke-width="1.8"/><circle cx="1147.1" cy="525.5" r="2.3" fill="#fff" stroke="#f5b08a" stroke-width="1.8"/><circle cx="1160.4" cy="525.5" r="2.3" fill="#fff" stroke="#f5b08a" stroke-width="1.8"/><circle cx="1173.8" cy="525.5" r="2.3" fill="#fff" stroke="#f5b08a" stroke-width="1.8"/><circle cx="1187.2" cy="525.5" r="2.3" fill="#fff" stroke="#f5b08a" stroke-width="1.8"/><circle cx="1200.6" cy="525.5" r="2.3" fill="#fff" stroke="#f5b08a" stroke-width="1.8"/><circle cx="1213.9" cy="525.5" r="2.3" fill="#fff" stroke="#f5b08a" stroke-width="1.8"/><circle cx="1227.3" cy="525.5" r="2.3" fill="#fff" stroke="#f5b08a" stroke-width="1.8"/></g><g><line x1="438.2" x2="1227.3" y1="219.8" y2="219.8" stroke="#000000" stroke-width="4"/><circle cx="438.2" cy="219.8" r="2.0" fill="#fff" stroke="#000000" stroke-width="1.8"/><circle cx="451.6" cy="219.8" r="2.0" fill="#fff" stroke="#000000" stroke-width="1.8"/><circle cx="464.9" cy="219.8" r="2.0" fill="#fff" stroke="#000000" stroke-width="1.8"/><circle cx="478.3" cy="219.8" r="2.0" fill="#fff" stroke="#000000" stroke-width="1.8"/><circle cx="491.7" cy="219.8" r="2.0" fill="#fff" stroke="#000000" stroke-width="1.8"/><circle cx="505.1" cy="219.8" r="2.0" fill="#fff" stroke="#000000" stroke-width="1.8"/><circle cx="518.4" cy="219.8" r="2.0" fill="#fff" stroke="#000000" stroke-width="1.8"/><circle cx="531.8" cy="219.8" r="2.0" fill="#fff" stroke="#000000" stroke-width="1.8"/><circle cx="545.2" cy="219.8" r="2.0" fill="#fff" stroke="#000000" stroke-width="1.8"/><circle cx="558.6" cy="219.8" r="2.0" fill="#fff" stroke="#000000" stroke-width="1.8"/><circle cx="571.9" cy="219.8" r="2.0" fill="#fff" stroke="#000000" stroke-width="1.8"/><circle cx="585.3" cy="219.8" r="2.0" fill="#fff" stroke="#000000" stroke-width="1.8"/><circle cx="598.7" cy="219.8" r="2.0" fill="#fff" stroke="#000000" stroke-width="1.8"/><circle cx="612.1" cy="219.8" r="2.0" fill="#fff" stroke="#000000" stroke-width="1.8"/><circle cx="625.4" cy="219.8" r="2.0" fill="#fff" stroke="#000000" stroke-width="1.8"/><circle cx="638.8" cy="219.8" r="2.0" fill="#fff" stroke="#000000" stroke-width="1.8"/><circle cx="652.2" cy="219.8" r="2.0" fill="#fff" stroke="#000000" stroke-width="1.8"/><circle cx="665.6" cy="219.8" r="2.0" fill="#fff" stroke="#000000" stroke-width="1.8"/><circle cx="678.9" cy="219.8" r="2.0" fill="#fff" stroke="#000000" stroke-width="1.8"/><circle cx="692.3" cy="219.8" r="2.0" fill="#fff" stroke="#000000" stroke-width="1.8"/><circle cx="705.7" cy="219.8" r="2.0" fill="#fff" stroke="#000000" stroke-width="1.8"/><circle cx="719.1" cy="219.8" r="2.0" fill="#fff" stroke="#000000" stroke-width="1.8"/><circle cx="732.4" cy="219.8" r="2.0" fill="#fff" stroke="#000000" stroke-width="1.8"/><circle cx="745.8" cy="219.8" r="2.0" fill="#fff" stroke="#000000" stroke-width="1.8"/><circle cx="759.2" cy="219.8" r="2.0" fill="#fff" stroke="#000000" stroke-width="1.8"/><circle cx="772.6" cy="219.8" r="2.0" fill="#fff" stroke="#000000" stroke-width="1.8"/><circle cx="785.9" cy="219.8" r="2.0" fill="#fff" stroke="#000000" stroke-width="1.8"/><circle cx="799.3" cy="219.8" r="2.0" fill="#fff" stroke="#000000" stroke-width="1.8"/><circle cx="812.7" cy="219.8" r="2.0" fill="#fff" stroke="#000000" stroke-width="1.8"/><circle cx="826.1" cy="219.8" r="2.0" fill="#fff" stroke="#000000" stroke-width="1.8"/><circle cx="839.4" cy="219.8" r="2.0" fill="#fff" stroke="#000000" stroke-width="1.8"/><circle cx="852.8" cy="219.8" r="2.0" fill="#fff" stroke="#000000" stroke-width="1.8"/><circle cx="866.2" cy="219.8" r="2.0" fill="#fff" stroke="#000000" stroke-width="1.8"/><circle cx="879.6" cy="219.8" r="2.0" fill="#fff" stroke="#000000" stroke-width="1.8"/><circle cx="892.9" cy="219.8" r="2.0" fill="#fff" stroke="#000000" stroke-width="1.8"/><circle cx="906.3" cy="219.8" r="2.0" fill="#fff" stroke="#000000" stroke-width="1.8"/><circle cx="919.7" cy="219.8" r="2.0" fill="#fff" stroke="#000000" stroke-width="1.8"/><circle cx="933.1" cy="219.8" r="2.0" fill="#fff" stroke="#000000" stroke-width="1.8"/><circle cx="946.4" cy="219.8" r="2.0" fill="#fff" stroke="#000000" stroke-width="1.8"/><circle cx="959.8" cy="219.8" r="2.0" fill="#fff" stroke="#000000" stroke-width="1.8"/><circle cx="973.2" cy="219.8" r="2.0" fill="#fff" stroke="#000000" stroke-width="1.8"/><circle cx="986.6" cy="219.8" r="2.0" fill="#fff" stroke="#000000" stroke-width="1.8"/><circle cx="999.9" cy="219.8" r="2.0" fill="#fff" stroke="#000000" stroke-width="1.8"/><circle cx="1013.3" cy="219.8" r="2.0" fill="#fff" stroke="#000000" stroke-width="1.8"/><circle cx="1026.7" cy="219.8" r="2.0" fill="#fff" stroke="#000000" stroke-width="1.8"/><circle cx="1040.1" cy="219.8" r="2.0" fill="#fff" stroke="#000000" stroke-width="1.8"/><circle cx="1053.4" cy="219.8" r="2.0" fill="#fff" stroke="#000000" stroke-width="1.8"/><circle cx="1066.8" cy="219.8" r="2.0" fill="#fff" stroke="#000000" stroke-width="1.8"/><circle cx="1080.2" cy="219.8" r="2.0" fill="#fff" stroke="#000000" stroke-width="1.8"/><circle cx="1093.6" cy="219.8" r="2.0" fill="#fff" stroke="#000000" stroke-width="1.8"/><circle cx="1106.9" cy="219.8" r="2.0" fill="#fff" stroke="#000000" stroke-width="1.8"/><circle cx="1120.3" cy="219.8" r="2.0" fill="#fff" stroke="#000000" stroke-width="1.8"/><circle cx="1133.7" cy="219.8" r="2.0" fill="#fff" stroke="#000000" stroke-width="1.8"/><circle cx="1147.1" cy="219.8" r="2.0" fill="#fff" stroke="#000000" stroke-width="1.8"/><circle cx="1160.4" cy="219.8" r="2.0" fill="#fff" stroke="#000000" stroke-width="1.8"/><circle cx="1173.8" cy="219.8" r="2.0" fill="#fff" stroke="#000000" stroke-width="1.8"/><circle cx="1187.2" cy="219.8" r="2.0" fill="#fff" stroke="#000000" stroke-width="1.8"/><circle cx="1200.6" cy="219.8" r="2.0" fill="#fff" stroke="#000000" stroke-width="1.8"/><circle cx="1213.9" cy="219.8" r="2.0" fill="#fff" stroke="#000000" stroke-width="1.8"/><circle cx="1227.3" cy="219.8" r="2.0" fill="#fff" stroke="#000000" stroke-width="1.8"/></g><g><line x1="438.2" x2="1227.3" y1="302.6" y2="302.6" stroke="#d2691e" stroke-width="4"/><circle cx="438.2" cy="302.6" r="2.0" fill="#fff" stroke="#d2691e" stroke-width="1.8"/><circle cx="451.6" cy="302.6" r="2.0" fill="#fff" stroke="#d2691e" stroke-width="1.8"/><circle cx="464.9" cy="302.6" r="2.0" fill="#fff" stroke="#d2691e" stroke-width="1.8"/><circle cx="478.3" cy="302.6" r="2.0" fill="#fff" stroke="#d2691e" stroke-width="1.8"/><circle cx="491.7" cy="302.6" r="2.0" fill="#fff" stroke="#d2691e" stroke-width="1.8"/><circle cx="505.1" cy="302.6" r="2.0" fill="#fff" stroke="#d2691e" stroke-width="1.8"/><circle cx="518.4" cy="302.6" r="2.0" fill="#fff" stroke="#d2691e" stroke-width="1.8"/><circle cx="531.8" cy="302.6" r="2.0" fill="#fff" stroke="#d2691e" stroke-width="1.8"/><circle cx="545.2" cy="302.6" r="2.0" fill="#fff" stroke="#d2691e" stroke-width="1.8"/><circle cx="558.6" cy="302.6" r="2.0" fill="#fff" stroke="#d2691e" stroke-width="1.8"/><circle cx="571.9" cy="302.6" r="2.0" fill="#fff" stroke="#d2691e" stroke-width="1.8"/><circle cx="585.3" cy="302.6" r="2.0" fill="#fff" stroke="#d2691e" stroke-width="1.8"/><circle cx="598.7" cy="302.6" r="2.0" fill="#fff" stroke="#d2691e" stroke-width="1.8"/><circle cx="612.1" cy="302.6" r="2.0" fill="#fff" stroke="#d2691e" stroke-width="1.8"/><circle cx="625.4" cy="302.6" r="2.0" fill="#fff" stroke="#d2691e" stroke-width="1.8"/><circle cx="638.8" cy="302.6" r="2.0" fill="#fff" stroke="#d2691e" stroke-width="1.8"/><circle cx="652.2" cy="302.6" r="2.0" fill="#fff" stroke="#d2691e" stroke-width="1.8"/><circle cx="665.6" cy="302.6" r="2.0" fill="#fff" stroke="#d2691e" stroke-width="1.8"/><circle cx="678.9" cy="302.6" r="2.0" fill="#fff" stroke="#d2691e" stroke-width="1.8"/><circle cx="692.3" cy="302.6" r="2.0" fill="#fff" stroke="#d2691e" stroke-width="1.8"/><circle cx="705.7" cy="302.6" r="2.0" fill="#fff" stroke="#d2691e" stroke-width="1.8"/><circle cx="719.1" cy="302.6" r="2.0" fill="#fff" stroke="#d2691e" stroke-width="1.8"/><circle cx="732.4" cy="302.6" r="2.0" fill="#fff" stroke="#d2691e" stroke-width="1.8"/><circle cx="745.8" cy="302.6" r="2.0" fill="#fff" stroke="#d2691e" stroke-width="1.8"/><circle cx="759.2" cy="302.6" r="2.0" fill="#fff" stroke="#d2691e" stroke-width="1.8"/><circle cx="772.6" cy="302.6" r="2.0" fill="#fff" stroke="#d2691e" stroke-width="1.8"/><circle cx="785.9" cy="302.6" r="2.0" fill="#fff" stroke="#d2691e" stroke-width="1.8"/><circle cx="799.3" cy="302.6" r="2.0" fill="#fff" stroke="#d2691e" stroke-width="1.8"/><circle cx="812.7" cy="302.6" r="2.0" fill="#fff" stroke="#d2691e" stroke-width="1.8"/><circle cx="826.1" cy="302.6" r="2.0" fill="#fff" stroke="#d2691e" stroke-width="1.8"/><circle cx="839.4" cy="302.6" r="2.0" fill="#fff" stroke="#d2691e" stroke-width="1.8"/><circle cx="852.8" cy="302.6" r="2.0" fill="#fff" stroke="#d2691e" stroke-width="1.8"/><circle cx="866.2" cy="302.6" r="2.0" fill="#fff" stroke="#d2691e" stroke-width="1.8"/><circle cx="879.6" cy="302.6" r="2.0" fill="#fff" stroke="#d2691e" stroke-width="1.8"/><circle cx="892.9" cy="302.6" r="2.0" fill="#fff" stroke="#d2691e" stroke-width="1.8"/><circle cx="906.3" cy="302.6" r="2.0" fill="#fff" stroke="#d2691e" stroke-width="1.8"/><circle cx="919.7" cy="302.6" r="2.0" fill="#fff" stroke="#d2691e" stroke-width="1.8"/><circle cx="933.1" cy="302.6" r="2.0" fill="#fff" stroke="#d2691e" stroke-width="1.8"/><circle cx="946.4" cy="302.6" r="2.0" fill="#fff" stroke="#d2691e" stroke-width="1.8"/><circle cx="959.8" cy="302.6" r="2.0" fill="#fff" stroke="#d2691e" stroke-width="1.8"/><circle cx="973.2" cy="302.6" r="2.0" fill="#fff" stroke="#d2691e" stroke-width="1.8"/><circle cx="986.6" cy="302.6" r="2.0" fill="#fff" stroke="#d2691e" stroke-width="1.8"/><circle cx="999.9" cy="302.6" r="2.0" fill="#fff" stroke="#d2691e" stroke-width="1.8"/><circle cx="1013.3" cy="302.6" r="2.0" fill="#fff" stroke="#d2691e" stroke-width="1.8"/><circle cx="1026.7" cy="302.6" r="2.0" fill="#fff" stroke="#d2691e" stroke-width="1.8"/><circle cx="1040.1" cy="302.6" r="2.0" fill="#fff" stroke="#d2691e" stroke-width="1.8"/><circle cx="1053.4" cy="302.6" r="2.0" fill="#fff" stroke="#d2691e" stroke-width="1.8"/><circle cx="1066.8" cy="302.6" r="2.0" fill="#fff" stroke="#d2691e" stroke-width="1.8"/><circle cx="1080.2" cy="302.6" r="2.0" fill="#fff" stroke="#d2691e" stroke-width="1.8"/><circle cx="1093.6" cy="302.6" r="2.0" fill="#fff" stroke="#d2691e" stroke-width="1.8"/><circle cx="1106.9" cy="302.6" r="2.0" fill="#fff" stroke="#d2691e" stroke-width="1.8"/><circle cx="1120.3" cy="302.6" r="2.0" fill="#fff" stroke="#d2691e" stroke-width="1.8"/><circle cx="1133.7" cy="302.6" r="2.0" fill="#fff" stroke="#d2691e" stroke-width="1.8"/><circle cx="1147.1" cy="302.6" r="2.0" fill="#fff" stroke="#d2691e" stroke-width="1.8"/><circle cx="1160.4" cy="302.6" r="2.0" fill="#fff" stroke="#d2691e" stroke-width="1.8"/><circle cx="1173.8" cy="302.6" r="2.0" fill="#fff" stroke="#d2691e" stroke-width="1.8"/><circle cx="1187.2" cy="302.6" r="2.0" fill="#fff" stroke="#d2691e" stroke-width="1.8"/><circle cx="1200.6" cy="302.6" r="2.0" fill="#fff" stroke="#d2691e" stroke-width="1.8"/><circle cx="1213.9" cy="302.6" r="2.0" fill="#fff" stroke="#d2691e" stroke-width="1.8"/><circle cx="1227.3" cy="302.6" r="2.0" fill="#fff" stroke="#d2691e" stroke-width="1.8"/></g><g><line x1="438.2" x2="1227.3" y1="374.5" y2="374.5" stroke="#ff0000" stroke-width="4"/><circle cx="438.2" cy="374.5" r="2.0" fill="#fff" stroke="#ff0000" stroke-width="1.8"/><circle cx="451.6" cy="374.5" r="2.0" fill="#fff" stroke="#ff0000" stroke-width="1.8"/><circle cx="464.9" cy="374.5" r="2.0" fill="#fff" stroke="#ff0000" stroke-width="1.8"/><circle cx="478.3" cy="374.5" r="2.0" fill="#fff" stroke="#ff0000" stroke-width="1.8"/><circle cx="491.7" cy="374.5" r="2.0" fill="#fff" stroke="#ff0000" stroke-width="1.8"/><circle cx="505.1" cy="374.5" r="2.0" fill="#fff" stroke="#ff0000" stroke-width="1.8"/><circle cx="518.4" cy="374.5" r="2.0" fill="#fff" stroke="#ff0000" stroke-width="1.8"/><circle cx="531.8" cy="374.5" r="2.0" fill="#fff" stroke="#ff0000" stroke-width="1.8"/><circle cx="545.2" cy="374.5" r="2.0" fill="#fff" stroke="#ff0000" stroke-width="1.8"/><circle cx="558.6" cy="374.5" r="2.0" fill="#fff" stroke="#ff0000" stroke-width="1.8"/><circle cx="571.9" cy="374.5" r="2.0" fill="#fff" stroke="#ff0000" stroke-width="1.8"/><circle cx="585.3" cy="374.5" r="2.0" fill="#fff" stroke="#ff0000" stroke-width="1.8"/><circle cx="598.7" cy="374.5" r="2.0" fill="#fff" stroke="#ff0000" stroke-width="1.8"/><circle cx="612.1" cy="374.5" r="2.0" fill="#fff" stroke="#ff0000" stroke-width="1.8"/><circle cx="625.4" cy="374.5" r="2.0" fill="#fff" stroke="#ff0000" stroke-width="1.8"/><circle cx="638.8" cy="374.5" r="2.0" fill="#fff" stroke="#ff0000" stroke-width="1.8"/><circle cx="652.2" cy="374.5" r="2.0" fill="#fff" stroke="#ff0000" stroke-width="1.8"/><circle cx="665.6" cy="374.5" r="2.0" fill="#fff" stroke="#ff0000" stroke-width="1.8"/><circle cx="678.9" cy="374.5" r="2.0" fill="#fff" stroke="#ff0000" stroke-width="1.8"/><circle cx="692.3" cy="374.5" r="2.0" fill="#fff" stroke="#ff0000" stroke-width="1.8"/><circle cx="705.7" cy="374.5" r="2.0" fill="#fff" stroke="#ff0000" stroke-width="1.8"/><circle cx="719.1" cy="374.5" r="2.0" fill="#fff" stroke="#ff0000" stroke-width="1.8"/><circle cx="732.4" cy="374.5" r="2.0" fill="#fff" stroke="#ff0000" stroke-width="1.8"/><circle cx="745.8" cy="374.5" r="2.0" fill="#fff" stroke="#ff0000" stroke-width="1.8"/><circle cx="759.2" cy="374.5" r="2.0" fill="#fff" stroke="#ff0000" stroke-width="1.8"/><circle cx="772.6" cy="374.5" r="2.0" fill="#fff" stroke="#ff0000" stroke-width="1.8"/><circle cx="785.9" cy="374.5" r="2.0" fill="#fff" stroke="#ff0000" stroke-width="1.8"/><circle cx="799.3" cy="374.5" r="2.0" fill="#fff" stroke="#ff0000" stroke-width="1.8"/><circle cx="812.7" cy="374.5" r="2.0" fill="#fff" stroke="#ff0000" stroke-width="1.8"/><circle cx="826.1" cy="374.5" r="2.0" fill="#fff" stroke="#ff0000" stroke-width="1.8"/><circle cx="839.4" cy="374.5" r="2.0" fill="#fff" stroke="#ff0000" stroke-width="1.8"/><circle cx="852.8" cy="374.5" r="2.0" fill="#fff" stroke="#ff0000" stroke-width="1.8"/><circle cx="866.2" cy="374.5" r="2.0" fill="#fff" stroke="#ff0000" stroke-width="1.8"/><circle cx="879.6" cy="374.5" r="2.0" fill="#fff" stroke="#ff0000" stroke-width="1.8"/><circle cx="892.9" cy="374.5" r="2.0" fill="#fff" stroke="#ff0000" stroke-width="1.8"/><circle cx="906.3" cy="374.5" r="2.0" fill="#fff" stroke="#ff0000" stroke-width="1.8"/><circle cx="919.7" cy="374.5" r="2.0" fill="#fff" stroke="#ff0000" stroke-width="1.8"/><circle cx="933.1" cy="374.5" r="2.0" fill="#fff" stroke="#ff0000" stroke-width="1.8"/><circle cx="946.4" cy="374.5" r="2.0" fill="#fff" stroke="#ff0000" stroke-width="1.8"/><circle cx="959.8" cy="374.5" r="2.0" fill="#fff" stroke="#ff0000" stroke-width="1.8"/><circle cx="973.2" cy="374.5" r="2.0" fill="#fff" stroke="#ff0000" stroke-width="1.8"/><circle cx="986.6" cy="374.5" r="2.0" fill="#fff" stroke="#ff0000" stroke-width="1.8"/><circle cx="999.9" cy="374.5" r="2.0" fill="#fff" stroke="#ff0000" stroke-width="1.8"/><circle cx="1013.3" cy="374.5" r="2.0" fill="#fff" stroke="#ff0000" stroke-width="1.8"/><circle cx="1026.7" cy="374.5" r="2.0" fill="#fff" stroke="#ff0000" stroke-width="1.8"/><circle cx="1040.1" cy="374.5" r="2.0" fill="#fff" stroke="#ff0000" stroke-width="1.8"/><circle cx="1053.4" cy="374.5" r="2.0" fill="#fff" stroke="#ff0000" stroke-width="1.8"/><circle cx="1066.8" cy="374.5" r="2.0" fill="#fff" stroke="#ff0000" stroke-width="1.8"/><circle cx="1080.2" cy="374.5" r="2.0" fill="#fff" stroke="#ff0000" stroke-width="1.8"/><circle cx="1093.6" cy="374.5" r="2.0" fill="#fff" stroke="#ff0000" stroke-width="1.8"/><circle cx="1106.9" cy="374.5" r="2.0" fill="#fff" stroke="#ff0000" stroke-width="1.8"/><circle cx="1120.3" cy="374.5" r="2.0" fill="#fff" stroke="#ff0000" stroke-width="1.8"/><circle cx="1133.7" cy="374.5" r="2.0" fill="#fff" stroke="#ff0000" stroke-width="1.8"/><circle cx="1147.1" cy="374.5" r="2.0" fill="#fff" stroke="#ff0000" stroke-width="1.8"/><circle cx="1160.4" cy="374.5" r="2.0" fill="#fff" stroke="#ff0000" stroke-width="1.8"/><circle cx="1173.8" cy="374.5" r="2.0" fill="#fff" stroke="#ff0000" stroke-width="1.8"/><circle cx="1187.2" cy="374.5" r="2.0" fill="#fff" stroke="#ff0000" stroke-width="1.8"/><circle cx="1200.6" cy="374.5" r="2.0" fill="#fff" stroke="#ff0000" stroke-width="1.8"/><circle cx="1213.9" cy="374.5" r="2.0" fill="#fff" stroke="#ff0000" stroke-width="1.8"/><circle cx="1227.3" cy="374.5" r="2.0" fill="#fff" stroke="#ff0000" stroke-width="1.8"/></g><g><line x1="438.2" x2="1227.3" y1="444.5" y2="444.5" stroke="#4682b4" stroke-width="4"/><circle cx="438.2" cy="444.5" r="2.0" fill="#fff" stroke="#4682b4" stroke-width="1.8"/><circle cx="451.6" cy="444.5" r="2.0" fill="#fff" stroke="#4682b4" stroke-width="1.8"/><circle cx="464.9" cy="444.5" r="2.0" fill="#fff" stroke="#4682b4" stroke-width="1.8"/><circle cx="478.3" cy="444.5" r="2.0" fill="#fff" stroke="#4682b4" stroke-width="1.8"/><circle cx="491.7" cy="444.5" r="2.0" fill="#fff" stroke="#4682b4" stroke-width="1.8"/><circle cx="505.1" cy="444.5" r="2.0" fill="#fff" stroke="#4682b4" stroke-width="1.8"/><circle cx="518.4" cy="444.5" r="2.0" fill="#fff" stroke="#4682b4" stroke-width="1.8"/><circle cx="531.8" cy="444.5" r="2.0" fill="#fff" stroke="#4682b4" stroke-width="1.8"/><circle cx="545.2" cy="444.5" r="2.0" fill="#fff" stroke="#4682b4" stroke-width="1.8"/><circle cx="558.6" cy="444.5" r="2.0" fill="#fff" stroke="#4682b4" stroke-width="1.8"/><circle cx="571.9" cy="444.5" r="2.0" fill="#fff" stroke="#4682b4" stroke-width="1.8"/><circle cx="585.3" cy="444.5" r="2.0" fill="#fff" stroke="#4682b4" stroke-width="1.8"/><circle cx="598.7" cy="444.5" r="2.0" fill="#fff" stroke="#4682b4" stroke-width="1.8"/><circle cx="612.1" cy="444.5" r="2.0" fill="#fff" stroke="#4682b4" stroke-width="1.8"/><circle cx="625.4" cy="444.5" r="2.0" fill="#fff" stroke="#4682b4" stroke-width="1.8"/><circle cx="638.8" cy="444.5" r="2.0" fill="#fff" stroke="#4682b4" stroke-width="1.8"/><circle cx="652.2" cy="444.5" r="2.0" fill="#fff" stroke="#4682b4" stroke-width="1.8"/><circle cx="665.6" cy="444.5" r="2.0" fill="#fff" stroke="#4682b4" stroke-width="1.8"/><circle cx="678.9" cy="444.5" r="2.0" fill="#fff" stroke="#4682b4" stroke-width="1.8"/><circle cx="692.3" cy="444.5" r="2.0" fill="#fff" stroke="#4682b4" stroke-width="1.8"/><circle cx="705.7" cy="444.5" r="2.0" fill="#fff" stroke="#4682b4" stroke-width="1.8"/><circle cx="719.1" cy="444.5" r="2.0" fill="#fff" stroke="#4682b4" stroke-width="1.8"/><circle cx="732.4" cy="444.5" r="2.0" fill="#fff" stroke="#4682b4" stroke-width="1.8"/><circle cx="745.8" cy="444.5" r="2.0" fill="#fff" stroke="#4682b4" stroke-width="1.8"/><circle cx="759.2" cy="444.5" r="2.0" fill="#fff" stroke="#4682b4" stroke-width="1.8"/><circle cx="772.6" cy="444.5" r="2.0" fill="#fff" stroke="#4682b4" stroke-width="1.8"/><circle cx="785.9" cy="444.5" r="2.0" fill="#fff" stroke="#4682b4" stroke-width="1.8"/><circle cx="799.3" cy="444.5" r="2.0" fill="#fff" stroke="#4682b4" stroke-width="1.8"/><circle cx="812.7" cy="444.5" r="2.0" fill="#fff" stroke="#4682b4" stroke-width="1.8"/><circle cx="826.1" cy="444.5" r="2.0" fill="#fff" stroke="#4682b4" stroke-width="1.8"/><circle cx="839.4" cy="444.5" r="2.0" fill="#fff" stroke="#4682b4" stroke-width="1.8"/><circle cx="852.8" cy="444.5" r="2.0" fill="#fff" stroke="#4682b4" stroke-width="1.8"/><circle cx="866.2" cy="444.5" r="2.0" fill="#fff" stroke="#4682b4" stroke-width="1.8"/><circle cx="879.6" cy="444.5" r="2.0" fill="#fff" stroke="#4682b4" stroke-width="1.8"/><circle cx="892.9" cy="444.5" r="2.0" fill="#fff" stroke="#4682b4" stroke-width="1.8"/><circle cx="906.3" cy="444.5" r="2.0" fill="#fff" stroke="#4682b4" stroke-width="1.8"/><circle cx="919.7" cy="444.5" r="2.0" fill="#fff" stroke="#4682b4" stroke-width="1.8"/><circle cx="933.1" cy="444.5" r="2.0" fill="#fff" stroke="#4682b4" stroke-width="1.8"/><circle cx="946.4" cy="444.5" r="2.0" fill="#fff" stroke="#4682b4" stroke-width="1.8"/><circle cx="959.8" cy="444.5" r="2.0" fill="#fff" stroke="#4682b4" stroke-width="1.8"/><circle cx="973.2" cy="444.5" r="2.0" fill="#fff" stroke="#4682b4" stroke-width="1.8"/><circle cx="986.6" cy="444.5" r="2.0" fill="#fff" stroke="#4682b4" stroke-width="1.8"/><circle cx="999.9" cy="444.5" r="2.0" fill="#fff" stroke="#4682b4" stroke-width="1.8"/><circle cx="1013.3" cy="444.5" r="2.0" fill="#fff" stroke="#4682b4" stroke-width="1.8"/><circle cx="1026.7" cy="444.5" r="2.0" fill="#fff" stroke="#4682b4" stroke-width="1.8"/><circle cx="1040.1" cy="444.5" r="2.0" fill="#fff" stroke="#4682b4" stroke-width="1.8"/><circle cx="1053.4" cy="444.5" r="2.0" fill="#fff" stroke="#4682b4" stroke-width="1.8"/><circle cx="1066.8" cy="444.5" r="2.0" fill="#fff" stroke="#4682b4" stroke-width="1.8"/><circle cx="1080.2" cy="444.5" r="2.0" fill="#fff" stroke="#4682b4" stroke-width="1.8"/><circle cx="1093.6" cy="444.5" r="2.0" fill="#fff" stroke="#4682b4" stroke-width="1.8"/><circle cx="1106.9" cy="444.5" r="2.0" fill="#fff" stroke="#4682b4" stroke-width="1.8"/><circle cx="1120.3" cy="444.5" r="2.0" fill="#fff" stroke="#4682b4" stroke-width="1.8"/><circle cx="1133.7" cy="444.5" r="2.0" fill="#fff" stroke="#4682b4" stroke-width="1.8"/><circle cx="1147.1" cy="444.5" r="2.0" fill="#fff" stroke="#4682b4" stroke-width="1.8"/><circle cx="1160.4" cy="444.5" r="2.0" fill="#fff" stroke="#4682b4" stroke-width="1.8"/><circle cx="1173.8" cy="444.5" r="2.0" fill="#fff" stroke="#4682b4" stroke-width="1.8"/><circle cx="1187.2" cy="444.5" r="2.0" fill="#fff" stroke="#4682b4" stroke-width="1.8"/><circle cx="1200.6" cy="444.5" r="2.0" fill="#fff" stroke="#4682b4" stroke-width="1.8"/><circle cx="1213.9" cy="444.5" r="2.0" fill="#fff" stroke="#4682b4" stroke-width="1.8"/><circle cx="1227.3" cy="444.5" r="2.0" fill="#fff" stroke="#4682b4" stroke-width="1.8"/></g><g><line x1="438.2" x2="1227.3" y1="477.4" y2="477.4" stroke="#ee82ee" stroke-width="4"/><circle cx="438.2" cy="477.4" r="2.0" fill="#fff" stroke="#ee82ee" stroke-width="1.8"/><circle cx="451.6" cy="477.4" r="2.0" fill="#fff" stroke="#ee82ee" stroke-width="1.8"/><circle cx="464.9" cy="477.4" r="2.0" fill="#fff" stroke="#ee82ee" stroke-width="1.8"/><circle cx="478.3" cy="477.4" r="2.0" fill="#fff" stroke="#ee82ee" stroke-width="1.8"/><circle cx="491.7" cy="477.4" r="2.0" fill="#fff" stroke="#ee82ee" stroke-width="1.8"/><circle cx="505.1" cy="477.4" r="2.0" fill="#fff" stroke="#ee82ee" stroke-width="1.8"/><circle cx="518.4" cy="477.4" r="2.0" fill="#fff" stroke="#ee82ee" stroke-width="1.8"/><circle cx="531.8" cy="477.4" r="2.0" fill="#fff" stroke="#ee82ee" stroke-width="1.8"/><circle cx="545.2" cy="477.4" r="2.0" fill="#fff" stroke="#ee82ee" stroke-width="1.8"/><circle cx="558.6" cy="477.4" r="2.0" fill="#fff" stroke="#ee82ee" stroke-width="1.8"/><circle cx="571.9" cy="477.4" r="2.0" fill="#fff" stroke="#ee82ee" stroke-width="1.8"/><circle cx="585.3" cy="477.4" r="2.0" fill="#fff" stroke="#ee82ee" stroke-width="1.8"/><circle cx="598.7" cy="477.4" r="2.0" fill="#fff" stroke="#ee82ee" stroke-width="1.8"/><circle cx="612.1" cy="477.4" r="2.0" fill="#fff" stroke="#ee82ee" stroke-width="1.8"/><circle cx="625.4" cy="477.4" r="2.0" fill="#fff" stroke="#ee82ee" stroke-width="1.8"/><circle cx="638.8" cy="477.4" r="2.0" fill="#fff" stroke="#ee82ee" stroke-width="1.8"/><circle cx="652.2" cy="477.4" r="2.0" fill="#fff" stroke="#ee82ee" stroke-width="1.8"/><circle cx="665.6" cy="477.4" r="2.0" fill="#fff" stroke="#ee82ee" stroke-width="1.8"/><circle cx="678.9" cy="477.4" r="2.0" fill="#fff" stroke="#ee82ee" stroke-width="1.8"/><circle cx="692.3" cy="477.4" r="2.0" fill="#fff" stroke="#ee82ee" stroke-width="1.8"/><circle cx="705.7" cy="477.4" r="2.0" fill="#fff" stroke="#ee82ee" stroke-width="1.8"/><circle cx="719.1" cy="477.4" r="2.0" fill="#fff" stroke="#ee82ee" stroke-width="1.8"/><circle cx="732.4" cy="477.4" r="2.0" fill="#fff" stroke="#ee82ee" stroke-width="1.8"/><circle cx="745.8" cy="477.4" r="2.0" fill="#fff" stroke="#ee82ee" stroke-width="1.8"/><circle cx="759.2" cy="477.4" r="2.0" fill="#fff" stroke="#ee82ee" stroke-width="1.8"/><circle cx="772.6" cy="477.4" r="2.0" fill="#fff" stroke="#ee82ee" stroke-width="1.8"/><circle cx="785.9" cy="477.4" r="2.0" fill="#fff" stroke="#ee82ee" stroke-width="1.8"/><circle cx="799.3" cy="477.4" r="2.0" fill="#fff" stroke="#ee82ee" stroke-width="1.8"/><circle cx="812.7" cy="477.4" r="2.0" fill="#fff" stroke="#ee82ee" stroke-width="1.8"/><circle cx="826.1" cy="477.4" r="2.0" fill="#fff" stroke="#ee82ee" stroke-width="1.8"/><circle cx="839.4" cy="477.4" r="2.0" fill="#fff" stroke="#ee82ee" stroke-width="1.8"/><circle cx="852.8" cy="477.4" r="2.0" fill="#fff" stroke="#ee82ee" stroke-width="1.8"/><circle cx="866.2" cy="477.4" r="2.0" fill="#fff" stroke="#ee82ee" stroke-width="1.8"/><circle cx="879.6" cy="477.4" r="2.0" fill="#fff" stroke="#ee82ee" stroke-width="1.8"/><circle cx="892.9" cy="477.4" r="2.0" fill="#fff" stroke="#ee82ee" stroke-width="1.8"/><circle cx="906.3" cy="477.4" r="2.0" fill="#fff" stroke="#ee82ee" stroke-width="1.8"/><circle cx="919.7" cy="477.4" r="2.0" fill="#fff" stroke="#ee82ee" stroke-width="1.8"/><circle cx="933.1" cy="477.4" r="2.0" fill="#fff" stroke="#ee82ee" stroke-width="1.8"/><circle cx="946.4" cy="477.4" r="2.0" fill="#fff" stroke="#ee82ee" stroke-width="1.8"/><circle cx="959.8" cy="477.4" r="2.0" fill="#fff" stroke="#ee82ee" stroke-width="1.8"/><circle cx="973.2" cy="477.4" r="2.0" fill="#fff" stroke="#ee82ee" stroke-width="1.8"/><circle cx="986.6" cy="477.4" r="2.0" fill="#fff" stroke="#ee82ee" stroke-width="1.8"/><circle cx="999.9" cy="477.4" r="2.0" fill="#fff" stroke="#ee82ee" stroke-width="1.8"/><circle cx="1013.3" cy="477.4" r="2.0" fill="#fff" stroke="#ee82ee" stroke-width="1.8"/><circle cx="1026.7" cy="477.4" r="2.0" fill="#fff" stroke="#ee82ee" stroke-width="1.8"/><circle cx="1040.1" cy="477.4" r="2.0" fill="#fff" stroke="#ee82ee" stroke-width="1.8"/><circle cx="1053.4" cy="477.4" r="2.0" fill="#fff" stroke="#ee82ee" stroke-width="1.8"/><circle cx="1066.8" cy="477.4" r="2.0" fill="#fff" stroke="#ee82ee" stroke-width="1.8"/><circle cx="1080.2" cy="477.4" r="2.0" fill="#fff" stroke="#ee82ee" stroke-width="1.8"/><circle cx="1093.6" cy="477.4" r="2.0" fill="#fff" stroke="#ee82ee" stroke-width="1.8"/><circle cx="1106.9" cy="477.4" r="2.0" fill="#fff" stroke="#ee82ee" stroke-width="1.8"/><circle cx="1120.3" cy="477.4" r="2.0" fill="#fff" stroke="#ee82ee" stroke-width="1.8"/><circle cx="1133.7" cy="477.4" r="2.0" fill="#fff" stroke="#ee82ee" stroke-width="1.8"/><circle cx="1147.1" cy="477.4" r="2.0" fill="#fff" stroke="#ee82ee" stroke-width="1.8"/><circle cx="1160.4" cy="477.4" r="2.0" fill="#fff" stroke="#ee82ee" stroke-width="1.8"/><circle cx="1173.8" cy="477.4" r="2.0" fill="#fff" stroke="#ee82ee" stroke-width="1.8"/><circle cx="1187.2" cy="477.4" r="2.0" fill="#fff" stroke="#ee82ee" stroke-width="1.8"/><circle cx="1200.6" cy="477.4" r="2.0" fill="#fff" stroke="#ee82ee" stroke-width="1.8"/><circle cx="1213.9" cy="477.4" r="2.0" fill="#fff" stroke="#ee82ee" stroke-width="1.8"/><circle cx="1227.3" cy="477.4" r="2.0" fill="#fff" stroke="#ee82ee" stroke-width="1.8"/></g><g><line x1="438.2" x2="1227.3" y1="525.5" y2="525.5" stroke="#90ee90" stroke-width="4"/><circle cx="438.2" cy="525.5" r="2.0" fill="#fff" stroke="#90ee90" stroke-width="1.8"/><circle cx="451.6" cy="525.5" r="2.0" fill="#fff" stroke="#90ee90" stroke-width="1.8"/><circle cx="464.9" cy="525.5" r="2.0" fill="#fff" stroke="#90ee90" stroke-width="1.8"/><circle cx="478.3" cy="525.5" r="2.0" fill="#fff" stroke="#90ee90" stroke-width="1.8"/><circle cx="491.7" cy="525.5" r="2.0" fill="#fff" stroke="#90ee90" stroke-width="1.8"/><circle cx="505.1" cy="525.5" r="2.0" fill="#fff" stroke="#90ee90" stroke-width="1.8"/><circle cx="518.4" cy="525.5" r="2.0" fill="#fff" stroke="#90ee90" stroke-width="1.8"/><circle cx="531.8" cy="525.5" r="2.0" fill="#fff" stroke="#90ee90" stroke-width="1.8"/><circle cx="545.2" cy="525.5" r="2.0" fill="#fff" stroke="#90ee90" stroke-width="1.8"/><circle cx="558.6" cy="525.5" r="2.0" fill="#fff" stroke="#90ee90" stroke-width="1.8"/><circle cx="571.9" cy="525.5" r="2.0" fill="#fff" stroke="#90ee90" stroke-width="1.8"/><circle cx="585.3" cy="525.5" r="2.0" fill="#fff" stroke="#90ee90" stroke-width="1.8"/><circle cx="598.7" cy="525.5" r="2.0" fill="#fff" stroke="#90ee90" stroke-width="1.8"/><circle cx="612.1" cy="525.5" r="2.0" fill="#fff" stroke="#90ee90" stroke-width="1.8"/><circle cx="625.4" cy="525.5" r="2.0" fill="#fff" stroke="#90ee90" stroke-width="1.8"/><circle cx="638.8" cy="525.5" r="2.0" fill="#fff" stroke="#90ee90" stroke-width="1.8"/><circle cx="652.2" cy="525.5" r="2.0" fill="#fff" stroke="#90ee90" stroke-width="1.8"/><circle cx="665.6" cy="525.5" r="2.0" fill="#fff" stroke="#90ee90" stroke-width="1.8"/><circle cx="678.9" cy="525.5" r="2.0" fill="#fff" stroke="#90ee90" stroke-width="1.8"/><circle cx="692.3" cy="525.5" r="2.0" fill="#fff" stroke="#90ee90" stroke-width="1.8"/><circle cx="705.7" cy="525.5" r="2.0" fill="#fff" stroke="#90ee90" stroke-width="1.8"/><circle cx="719.1" cy="525.5" r="2.0" fill="#fff" stroke="#90ee90" stroke-width="1.8"/><circle cx="732.4" cy="525.5" r="2.0" fill="#fff" stroke="#90ee90" stroke-width="1.8"/><circle cx="745.8" cy="525.5" r="2.0" fill="#fff" stroke="#90ee90" stroke-width="1.8"/><circle cx="759.2" cy="525.5" r="2.0" fill="#fff" stroke="#90ee90" stroke-width="1.8"/><circle cx="772.6" cy="525.5" r="2.0" fill="#90ee90" stroke="#90ee90" stroke-width="1.8"/><circle cx="785.9" cy="525.5" r="2.0" fill="#fff" stroke="#90ee90" stroke-width="1.8"/><circle cx="799.3" cy="525.5" r="2.0" fill="#fff" stroke="#90ee90" stroke-width="1.8"/><circle cx="812.7" cy="525.5" r="2.0" fill="#fff" stroke="#90ee90" stroke-width="1.8"/><circle cx="826.1" cy="525.5" r="2.0" fill="#fff" stroke="#90ee90" stroke-width="1.8"/><circle cx="839.4" cy="525.5" r="2.0" fill="#fff" stroke="#90ee90" stroke-width="1.8"/><circle cx="852.8" cy="525.5" r="2.0" fill="#fff" stroke="#90ee90" stroke-width="1.8"/><circle cx="866.2" cy="525.5" r="2.0" fill="#fff" stroke="#90ee90" stroke-width="1.8"/><circle cx="879.6" cy="525.5" r="2.0" fill="#fff" stroke="#90ee90" stroke-width="1.8"/><circle cx="892.9" cy="525.5" r="2.0" fill="#fff" stroke="#90ee90" stroke-width="1.8"/><circle cx="906.3" cy="525.5" r="2.0" fill="#fff" stroke="#90ee90" stroke-width="1.8"/><circle cx="919.7" cy="525.5" r="2.0" fill="#fff" stroke="#90ee90" stroke-width="1.8"/><circle cx="933.1" cy="525.5" r="2.0" fill="#fff" stroke="#90ee90" stroke-width="1.8"/><circle cx="946.4" cy="525.5" r="2.0" fill="#fff" stroke="#90ee90" stroke-width="1.8"/><circle cx="959.8" cy="525.5" r="2.0" fill="#fff" stroke="#90ee90" stroke-width="1.8"/><circle cx="973.2" cy="525.5" r="2.0" fill="#fff" stroke="#90ee90" stroke-width="1.8"/><circle cx="986.6" cy="525.5" r="2.0" fill="#fff" stroke="#90ee90" stroke-width="1.8"/><circle cx="999.9" cy="525.5" r="2.0" fill="#fff" stroke="#90ee90" stroke-width="1.8"/><circle cx="1013.3" cy="525.5" r="2.0" fill="#fff" stroke="#90ee90" stroke-width="1.8"/><circle cx="1026.7" cy="525.5" r="2.0" fill="#fff" stroke="#90ee90" stroke-width="1.8"/><circle cx="1040.1" cy="525.5" r="2.0" fill="#fff" stroke="#90ee90" stroke-width="1.8"/><circle cx="1053.4" cy="525.5" r="2.0" fill="#fff" stroke="#90ee90" stroke-width="1.8"/><circle cx="1066.8" cy="525.5" r="2.0" fill="#fff" stroke="#90ee90" stroke-width="1.8"/><circle cx="1080.2" cy="525.5" r="2.0" fill="#fff" stroke="#90ee90" stroke-width="1.8"/><circle cx="1093.6" cy="525.5" r="2.0" fill="#fff" stroke="#90ee90" stroke-width="1.8"/><circle cx="1106.9" cy="525.5" r="2.0" fill="#fff" stroke="#90ee90" stroke-width="1.8"/><circle cx="1120.3" cy="525.5" r="2.0" fill="#fff" stroke="#90ee90" stroke-width="1.8"/><circle cx="1133.7" cy="525.5" r="2.0" fill="#fff" stroke="#90ee90" stroke-width="1.8"/><circle cx="1147.1" cy="525.5" r="2.0" fill="#fff" stroke="#90ee90" stroke-width="1.8"/><circle cx="1160.4" cy="525.5" r="2.0" fill="#fff" stroke="#90ee90" stroke-width="1.8"/><circle cx="1173.8" cy="525.5" r="2.0" fill="#fff" stroke="#90ee90" stroke-width="1.8"/><circle cx="1187.2" cy="525.5" r="2.0" fill="#fff" stroke="#90ee90" stroke-width="1.8"/><circle cx="1200.6" cy="525.5" r="2.0" fill="#fff" stroke="#90ee90" stroke-width="1.8"/><circle cx="1213.9" cy="525.5" r="2.0" fill="#fff" stroke="#90ee90" stroke-width="1.8"/><circle cx="1227.3" cy="525.5" r="2.0" fill="#fff" stroke="#90ee90" stroke-width="1.8"/></g><text x="818" y="146" font-size="16" text-anchor="middle" fill="#8c8c8c">Power (KW)</text><defs><linearGradient id="tg" x1="0" y1="0" x2="0" y2="1"><stop offset="0" stop-color="#b4f1b4"/><stop offset="1" stop-color="#90ee90"/></linearGradient></defs><rect x="783" y="495" width="110" height="28" rx="4" fill="#7fb0d0" opacity="0.8"/><rect x="781.5" y="493.5" width="110" height="28" rx="4" fill="url(#tg)" stroke="#8be08b"/><text x="788" y="511" font-size="12" fill="#000">Realtime: 59.4KW</text></svg><div class="lg" style="left:397.0px"><div class="lv">59 KW</div><div class="ln"><i style="background:#ffa07a"></i>PROVISIONED</div></div><div class="lg" style="left:517.2px"><div class="lv">222 KW</div><div class="ln"><i style="background:#000"></i>NAMEPLATE</div></div><div class="lg" style="left:637.4px"><div class="lv">178 KW</div><div class="ln"><i style="background:#d2691e"></i>DERATED</div></div><div class="lg" style="left:757.6px"><div class="lv">59 KW</div><div class="ln"><i style="background:#90ee90"></i>REALTIME</div></div><div class="lg" style="left:877.8px"><div class="lv">102 KW</div><div class="ln"><i style="background:#4682b4"></i>LAB</div></div><div class="lg" style="left:998.0px"><div class="lv">85 KW</div><div class="ln"><i style="background:#ee82ee"></i>USER DEFINED</div></div><div class="lg" style="left:1118.2px"><div class="lv">140 KW</div><div class="ln"><i style="background:#ff0000"></i>THRESHOLD</div></div><div id="tbar"><div class="b act" style="left:0.00px;width:44.72px"></div><div class="b" style="left:44.72px;width:44.72px"></div><div class="b" style="left:89.44px;width:44.72px"></div><div class="b" style="left:134.16px;width:44.72px"></div><div class="b" style="left:178.88px;width:44.72px"></div><div class="b" style="left:223.60px;width:44.72px"></div><div class="b" style="left:268.32px;width:44.72px;border-right:none"></div></div><div id="per"><div class="p act" style="width:60px">Daily</div><div class="p" style="left:59px;width:64px">Monthly</div><div class="p" style="left:123px;width:58px;border-right:none">Yearly</div></div><svg id="tbicons" class="abs" style="left:0;top:0" width="1259" height="767" viewBox="0 0 1259 767">
<defs>
<linearGradient id="fl" x1="0" y1="0" x2="1" y2="0"><stop offset="0" stop-color="#ff7a00"/><stop offset="1" stop-color="#c42800"/></linearGradient>
<radialGradient id="sph" cx="0.35" cy="0.3" r="0.8"><stop offset="0" stop-color="#e8f0ff"/><stop offset="0.5" stop-color="#5c82c8"/><stop offset="1" stop-color="#1f3f8a"/></radialGradient>
<linearGradient id="cone" x1="0" y1="0" x2="1" y2="0"><stop offset="0" stop-color="#8fe08f"/><stop offset="1" stop-color="#1f8a2f"/></linearGradient>
</defs>
<!-- power -->
<circle cx="420" cy="95" r="11" fill="#fff" stroke="#c00000" stroke-width="2.2"/>
<path d="M422.4 86 L424.6 86 L421.4 93.2 L425 93.2 L417 104 L419.4 96.4 L415.4 96.4 Z" fill="#c00000"/>
<!-- thermo -->
<circle cx="465" cy="95" r="11.2" fill="#fff" stroke="#333" stroke-width="1.8"/>
<path d="M462.8 89 a2.2 2.2 0 0 1 4.4 0 V96.8 a4 4 0 1 1 -4.4 0 Z" fill="#fff" stroke="#333" stroke-width="1.1"/>
<circle cx="465" cy="100.2" r="2.5" fill="#e8001c"/><rect x="463.9" y="94.5" width="2.2" height="5" fill="#e8001c"/>
<!-- flame -->
<circle cx="510" cy="95" r="11" fill="#fff" stroke="url(#fl)" stroke-width="2.2"/>
<path d="M510.5 86 C513 89 517.5 93 516.5 99 C516 102.5 513.5 104.5 510 104.5 C506 104.5 503.3 102 503.5 98.5 C503.7 95.5 506 94 506.5 91.5 C507.5 92.5 508 93.5 508 95 C510 92.5 511 89.5 510.5 86 Z" fill="url(#fl)"/>
<path d="M510 97 C511.5 99 513.2 100.5 513 102.3 C512.8 104 511.5 104.6 510 104.6 C508.4 104.6 507 103.8 507 102.2 C507 100.2 509.2 99.5 510 97 Z" fill="#fff"/>
<!-- server -->
<circle cx="554" cy="94.7" r="11" fill="#fff" stroke="#000" stroke-width="2.2"/>
<rect x="548.6" y="87.4" width="10.8" height="3.6" rx="1" fill="#fff" stroke="#000" stroke-width="1.2"/>
<rect x="548.6" y="92.9" width="10.8" height="3.6" rx="1" fill="#fff" stroke="#000" stroke-width="1.2"/>
<rect x="548.6" y="98.4" width="10.8" height="3.6" rx="1" fill="#fff" stroke="#000" stroke-width="1.2"/>
<rect x="549.6" y="88.6" width="1.2" height="1.2" fill="#000"/><rect x="549.6" y="99.6" width="1.2" height="1.2" fill="#000"/>
<!-- shapes -->
<circle cx="599" cy="95" r="11" fill="#fff" stroke="#8b3f0a" stroke-width="2.2"/>
<path d="M594.5 88 L598 97 L591 97 Z" fill="url(#cone)"/><ellipse cx="594.5" cy="97" rx="3.5" ry="1.3" fill="#2f9a3f"/>
<path d="M598 92.5 L603 90.5 L606.5 92 L606.5 97.5 L601.5 99.5 L598 98 Z" fill="#d01818"/><path d="M598 92.5 L603 90.5 L606.5 92 L601.5 94 Z" fill="#f06060"/>
<circle cx="599.3" cy="99.5" r="3.8" fill="url(#sph)"/>
<g transform="translate(632,84)">
<defs><linearGradient id="pgc8280a" x1="0" y1="0" x2="0" y2="1"><stop offset="0" stop-color="#ffd8cc"/><stop offset="1" stop-color="#f59a86"/></linearGradient></defs>
<rect x="0" y="0" width="23" height="23" rx="1.5" fill="#c8280a"/>
<rect x="0" y="20.5" width="23" height="2.5" rx="1" fill="#8a1400"/><rect x="20.8" y="1" width="2.2" height="22" rx="1" fill="#8a1400"/>
<rect x="2" y="2" width="19" height="18.5" fill="url(#pgc8280a)"/>
<path d="M4.5 7 H18.5 V13 H15.2 L11.5 16.6 L7.8 13 H4.5 Z" fill="#a01000"/>
<rect x="8" y="8" width="1.2" height="1.2" fill="#fff"/><rect x="10" y="8" width="1.2" height="1.2" fill="#fff"/><rect x="12" y="8" width="1.2" height="1.2" fill="#fff"/><rect x="14" y="8" width="1.2" height="1.2" fill="#fff"/>
</g><g transform="translate(677,84)">
<defs><linearGradient id="pg1088c0" x1="0" y1="0" x2="0" y2="1"><stop offset="0" stop-color="#d8f6ff"/><stop offset="1" stop-color="#86d8f5"/></linearGradient></defs>
<rect x="0" y="0" width="23" height="23" rx="1.5" fill="#1088c0"/>
<rect x="0" y="20.5" width="23" height="2.5" rx="1" fill="#083a60"/><rect x="20.8" y="1" width="2.2" height="22" rx="1" fill="#083a60"/>
<rect x="2" y="2" width="19" height="18.5" fill="url(#pg1088c0)"/>
<path d="M4.5 7 H18.5 V13 H15.2 L11.5 16.6 L7.8 13 H4.5 Z" fill="#0a4f86"/>
<rect x="8" y="8" width="1.2" height="1.2" fill="#fff"/><rect x="10" y="8" width="1.2" height="1.2" fill="#fff"/><rect x="12" y="8" width="1.2" height="1.2" fill="#fff"/><rect x="14" y="8" width="1.2" height="1.2" fill="#fff"/>
</g></svg><svg class="abs" style="left:1000px;top:736px" width="259" height="31" viewBox="1000 736 259 31" font-family="Liberation Sans, sans-serif">
<defs><linearGradient id="gCyl" x1="0" y1="0" x2="1" y2="0"><stop offset="0" stop-color="#3f6fc0"/><stop offset="0.5" stop-color="#9fc0f0"/><stop offset="1" stop-color="#3f6fc0"/></linearGradient></defs>
<g transform="translate(1008.6,744.5) scale(0.9)"><use href="#ic-info" width="16" height="16"/></g>
<circle cx="1031" cy="748.6" r="8" fill="#f00000"/><text x="1031" y="752.4" font-size="10.5" font-weight="bold" fill="#fff" text-anchor="middle">6</text>
<g transform="translate(1045.7,744.8) scale(1,0.9)"><use href="#ic-warn" width="16" height="16"/></g>
<circle cx="1069" cy="748.6" r="8" fill="#f00000"/><text x="1069" y="752.4" font-size="10.5" font-weight="bold" fill="#fff" text-anchor="middle">2</text>
<g transform="translate(1084.8,744.8) scale(0.9)"><use href="#ic-err" width="16" height="16"/></g>
<circle cx="1106.8" cy="748.6" r="8" fill="#f00000"/><text x="1106.8" y="752.4" font-size="10.5" font-weight="bold" fill="#fff" text-anchor="middle">1</text>
<line x1="1122.8" x2="1122.8" y1="744" y2="759" stroke="#8a8a8a" stroke-width="1"/>
<!-- mail -->
<g transform="translate(1132.7,743.8)"><path d="M0.6 5.4 L8 0.5 L15.6 5.4 V15.6 H0.6 Z" fill="#fbfbfb" stroke="#a0a0a0" stroke-width="0.9"/>
<path d="M1 5.6 L8 1.2 L15.2 5.6 L8 9.4 Z" fill="#e8f0fa"/>
<path d="M0.8 15.4 L8 9 L15.4 15.4" fill="none" stroke="#8a8a8a" stroke-width="0.8"/>
<path d="M3.4 6.2 A4.8 4.4 0 1 1 12.8 6.2" fill="none" stroke="#e01818" stroke-width="1.2"/>
<path d="M5.2 6.4 A3 2.8 0 1 1 11 6.2" fill="none" stroke="#e84040" stroke-width="1.1"/>
<circle cx="8" cy="6.4" r="1.5" fill="none" stroke="#d01010" stroke-width="1"/></g>
<!-- scroll -->
<g transform="translate(1162.5,743.8)"><rect x="0.6" y="1.8" width="9.4" height="11.8" fill="url(#gCyl)"/><ellipse cx="5.3" cy="1.9" rx="4.7" ry="1.5" fill="#7fa4e4" stroke="#3f5fa8" stroke-width="0.5"/><ellipse cx="5.3" cy="13.6" rx="4.7" ry="1.4" fill="#3f6fc0"/>
<path d="M8 4.4 H15 Q16.6 4.6 16 6.4 L14.6 11.4 Q16.6 11.6 16.2 13.6 Q15.8 15.6 14 15.6 H6.6 Q8.4 15.2 8.8 13.4 L10.2 7.4 H7.4 Q6.6 5 8 4.4 Z" fill="#f6f6f6" stroke="#7a7a7a" stroke-width="0.8"/></g>
<!-- window -->
<g transform="translate(1192.4,746.7)"><rect x="0.6" y="0.6" width="15.6" height="12.4" fill="#fff" stroke="#1a1a1a" stroke-width="1.1"/><rect x="0.6" y="0.6" width="15.6" height="2.6" fill="#1a1a1a"/><rect x="2" y="1.6" width="8" height="0.6" fill="#888"/><rect x="12" y="1.3" width="1" height="1" fill="#ccc"/><rect x="13.8" y="1.3" width="1" height="1" fill="#ccc"/>
<rect x="2.2" y="5.6" width="12" height="2.6" rx="0.8" fill="#fff" stroke="#bbb" stroke-width="0.5"/><rect x="2.4" y="5.9" width="6" height="2" fill="#58b020"/><rect x="7.6" y="9.6" width="6.6" height="2" fill="#333"/></g>
<!-- rack -->
<g transform="translate(1223.2,744.6)"><path d="M0.4 2.6 Q5.6 0.2 11 2.6 V13 Q5.6 15.6 0.4 13 Z" fill="#4a7ad4" stroke="#2f4fa8" stroke-width="0.7"/><path d="M1.4 3.2 Q3 2.4 4.6 2.4 V14 Q3 13.8 1.4 13Z" fill="#9fbcf0" opacity="0.7"/>
<g fill="#fff" stroke="#e01010" stroke-width="1"><circle cx="11.4" cy="1.6" r="1.3"/><circle cx="6.2" cy="5.8" r="1"/><circle cx="2.2" cy="11.8" r="1"/><circle cx="5.2" cy="13" r="1"/><circle cx="7.6" cy="11.8" r="1"/><circle cx="9.8" cy="11.8" r="1"/></g></g>
</svg></body></html>
